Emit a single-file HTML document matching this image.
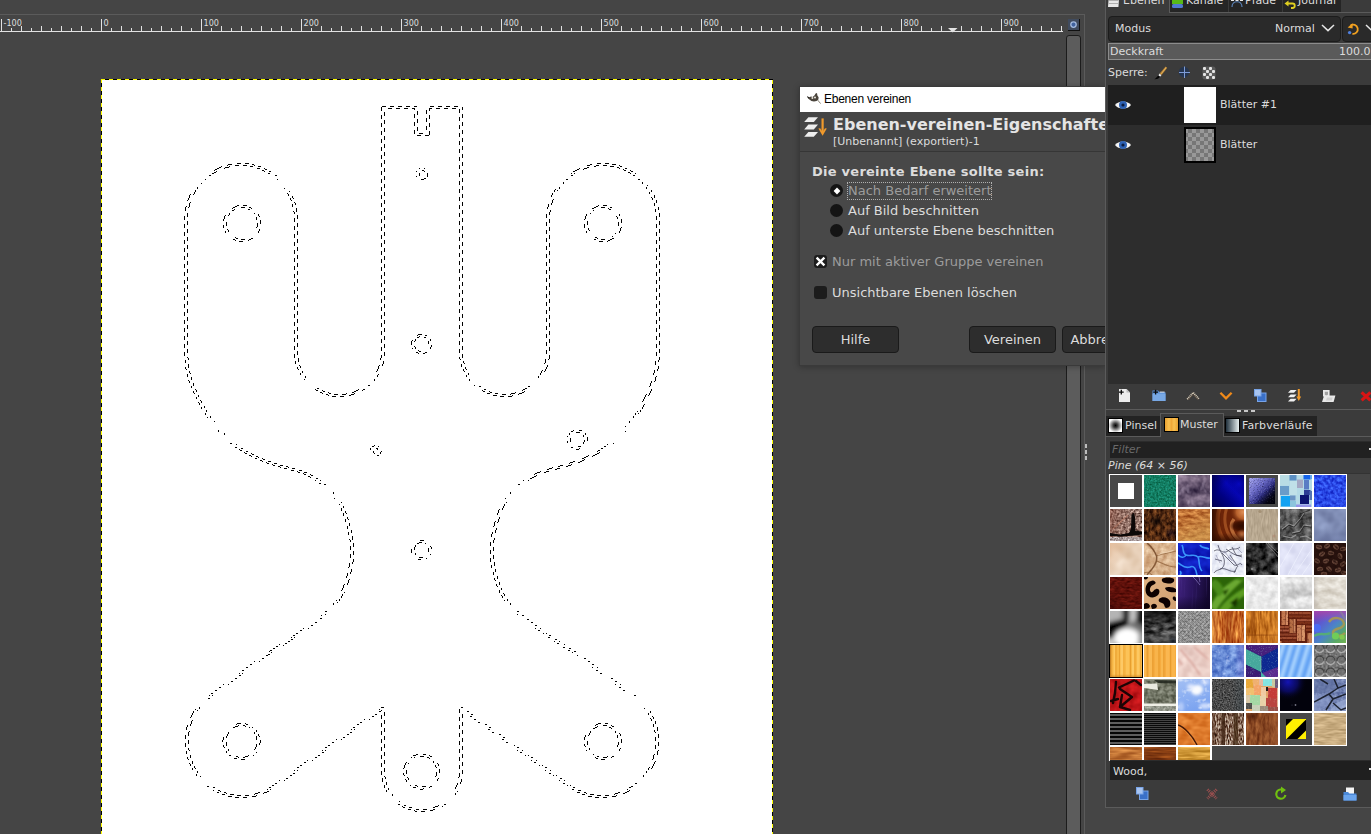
<!DOCTYPE html>
<html lang="de">
<head>
<meta charset="utf-8">
<title>Ebenen vereinen</title>
<style>
*{box-sizing:border-box;margin:0;padding:0}
html,body{width:1371px;height:834px;overflow:hidden;background:#454545}
body{position:relative;font-family:"DejaVu Sans","Liberation Sans",sans-serif;font-size:11px;color:#dcdcdc;line-height:1}
#root{position:absolute;left:0;top:0;width:1371px;height:834px;overflow:hidden;background:#454545}
#root div,#root svg,#root i{position:absolute;display:block}
#root .btn span{position:static}
.t{white-space:nowrap;line-height:1}
#rul{left:0;top:14px;width:1085px;height:18px;border-top:1px solid #5b5b5b}
#rul .num{font-family:"DejaVu Sans Condensed","DejaVu Sans",sans-serif;font-size:9px;color:#dcdcdc;top:4px}
#frameR{left:1084px;top:14px;width:1px;height:820px;background:#5b5b5b}
#nav{left:1068px;top:19px;width:12px;height:12px;background:#404b5e;border-right:1px solid #111;border-bottom:1px solid #111}
#vsb{left:1066px;top:35px;width:15px;height:810px;background:#5c5c5c;border:1px solid #1c1c1c;border-radius:3px}
#hdl{left:1085px;top:444px;width:3px;height:16px}
#hdl i{left:0;width:2px;height:4px;background:#bdbdbd}
#cv{left:101px;top:79px;width:672px;height:755px;background:#fff;overflow:hidden}
#cv .bt{left:0;top:0;width:672px;height:1px;background:repeating-linear-gradient(90deg,#ff0 0 4px,#000 4px 8px);z-index:2}
#cv .bl{left:0;top:0;width:1px;height:755px;background:repeating-linear-gradient(180deg,#ff0 0 4px,#000 4px 8px);z-index:2}
#cv .br{left:671px;top:0;width:1px;height:755px;background:linear-gradient(180deg,#000 0 1px,#ff0 1px 5px,#000 5px 8px) 0 0/1px 8px repeat-y;z-index:2}
#dlgsh{left:799px;top:86px;width:307px;height:280px;box-shadow:0 1px 6px rgba(0,0,0,.28);background:#3a3a3a}
#dlg{left:800px;top:87px;width:305px;height:278px;background:#484848;overflow:hidden}
#dlg .tb{left:0;top:0;width:305px;height:25px;background:#fff}
#dlg .tt{font-family:"Liberation Sans",sans-serif;color:#000;letter-spacing:-.25px}
#dlg .hd{left:0;top:25px;width:305px;height:40px;background:#454545;border-bottom:1px solid #363636}
#dlg .h1{font-weight:bold;color:#e4e4e4}
#dlg .h2{color:#dcdcdc}
.lbl{color:#dcdcdc}
.b{font-weight:bold;letter-spacing:.25px}
.dim{color:#9c9c9c}
.radio{width:13px;height:13px;border-radius:50%;background:#141414}
.rdot{width:6px;height:6px;background:#fff;transform:rotate(45deg) scale(.8)}
.focus{border:1px dotted #b0b0b0}
.chk{width:13px;height:13px;border-radius:3px;background:#1c1c1c}
.btn{height:27px;background:#2d2d2d;border:1px solid #1a1a1a;border-radius:4px;font-size:13px;color:#dcdcdc;text-align:center;line-height:25px;white-space:nowrap;overflow:hidden}
#pn{left:1105px;top:0;width:266px;height:834px;background:#3b3b3b;overflow:hidden}
.pt{color:#dcdcdc}
.it{font-style:italic}
.dk{background:#2a2a2a;border:1px solid #1c1c1c;border-radius:4px}

</style>
</head>
<body>
<div id="root">
<div id="rul">
<svg width="1064" height="18" style="left:0;top:0" shape-rendering="crispEdges" fill="#e2e2e2"><rect x="0" y="16" width="1063" height="1"/><rect x="1" y="4" width="1" height="13"/><rect x="11" y="13" width="1" height="4"/><rect x="21" y="11" width="1" height="6"/><rect x="31" y="13" width="1" height="4"/><rect x="41" y="11" width="1" height="6"/><rect x="51" y="13" width="1" height="4"/><rect x="61" y="11" width="1" height="6"/><rect x="71" y="13" width="1" height="4"/><rect x="81" y="11" width="1" height="6"/><rect x="91" y="13" width="1" height="4"/><rect x="101" y="4" width="1" height="13"/><rect x="111" y="13" width="1" height="4"/><rect x="121" y="11" width="1" height="6"/><rect x="131" y="13" width="1" height="4"/><rect x="141" y="11" width="1" height="6"/><rect x="151" y="13" width="1" height="4"/><rect x="161" y="11" width="1" height="6"/><rect x="171" y="13" width="1" height="4"/><rect x="181" y="11" width="1" height="6"/><rect x="191" y="13" width="1" height="4"/><rect x="201" y="4" width="1" height="13"/><rect x="211" y="13" width="1" height="4"/><rect x="221" y="11" width="1" height="6"/><rect x="231" y="13" width="1" height="4"/><rect x="241" y="11" width="1" height="6"/><rect x="251" y="13" width="1" height="4"/><rect x="261" y="11" width="1" height="6"/><rect x="271" y="13" width="1" height="4"/><rect x="281" y="11" width="1" height="6"/><rect x="291" y="13" width="1" height="4"/><rect x="301" y="4" width="1" height="13"/><rect x="311" y="13" width="1" height="4"/><rect x="321" y="11" width="1" height="6"/><rect x="331" y="13" width="1" height="4"/><rect x="341" y="11" width="1" height="6"/><rect x="351" y="13" width="1" height="4"/><rect x="361" y="11" width="1" height="6"/><rect x="371" y="13" width="1" height="4"/><rect x="381" y="11" width="1" height="6"/><rect x="391" y="13" width="1" height="4"/><rect x="401" y="4" width="1" height="13"/><rect x="411" y="13" width="1" height="4"/><rect x="421" y="11" width="1" height="6"/><rect x="431" y="13" width="1" height="4"/><rect x="441" y="11" width="1" height="6"/><rect x="451" y="13" width="1" height="4"/><rect x="461" y="11" width="1" height="6"/><rect x="471" y="13" width="1" height="4"/><rect x="481" y="11" width="1" height="6"/><rect x="491" y="13" width="1" height="4"/><rect x="501" y="4" width="1" height="13"/><rect x="511" y="13" width="1" height="4"/><rect x="521" y="11" width="1" height="6"/><rect x="531" y="13" width="1" height="4"/><rect x="541" y="11" width="1" height="6"/><rect x="551" y="13" width="1" height="4"/><rect x="561" y="11" width="1" height="6"/><rect x="571" y="13" width="1" height="4"/><rect x="581" y="11" width="1" height="6"/><rect x="591" y="13" width="1" height="4"/><rect x="601" y="4" width="1" height="13"/><rect x="611" y="13" width="1" height="4"/><rect x="621" y="11" width="1" height="6"/><rect x="631" y="13" width="1" height="4"/><rect x="641" y="11" width="1" height="6"/><rect x="651" y="13" width="1" height="4"/><rect x="661" y="11" width="1" height="6"/><rect x="671" y="13" width="1" height="4"/><rect x="681" y="11" width="1" height="6"/><rect x="691" y="13" width="1" height="4"/><rect x="701" y="4" width="1" height="13"/><rect x="711" y="13" width="1" height="4"/><rect x="721" y="11" width="1" height="6"/><rect x="731" y="13" width="1" height="4"/><rect x="741" y="11" width="1" height="6"/><rect x="751" y="13" width="1" height="4"/><rect x="761" y="11" width="1" height="6"/><rect x="771" y="13" width="1" height="4"/><rect x="781" y="11" width="1" height="6"/><rect x="791" y="13" width="1" height="4"/><rect x="801" y="4" width="1" height="13"/><rect x="811" y="13" width="1" height="4"/><rect x="821" y="11" width="1" height="6"/><rect x="831" y="13" width="1" height="4"/><rect x="841" y="11" width="1" height="6"/><rect x="851" y="13" width="1" height="4"/><rect x="861" y="11" width="1" height="6"/><rect x="871" y="13" width="1" height="4"/><rect x="881" y="11" width="1" height="6"/><rect x="891" y="13" width="1" height="4"/><rect x="901" y="4" width="1" height="13"/><rect x="911" y="13" width="1" height="4"/><rect x="921" y="11" width="1" height="6"/><rect x="931" y="13" width="1" height="4"/><rect x="941" y="11" width="1" height="6"/><rect x="951" y="13" width="1" height="4"/><rect x="961" y="11" width="1" height="6"/><rect x="971" y="13" width="1" height="4"/><rect x="981" y="11" width="1" height="6"/><rect x="991" y="13" width="1" height="4"/><rect x="1001" y="4" width="1" height="13"/><rect x="1011" y="13" width="1" height="4"/><rect x="1021" y="11" width="1" height="6"/><rect x="1031" y="13" width="1" height="4"/><rect x="1041" y="11" width="1" height="6"/><rect x="1051" y="13" width="1" height="4"/><rect x="1061" y="11" width="1" height="6"/></svg>
<div class="t num" style="left:3.5px">-100</div>
<div class="t num" style="left:103.5px">0</div>
<div class="t num" style="left:203.5px">100</div>
<div class="t num" style="left:303.5px">200</div>
<div class="t num" style="left:403.5px">300</div>
<div class="t num" style="left:503.5px">400</div>
<div class="t num" style="left:603.5px">500</div>
<div class="t num" style="left:703.5px">600</div>
<div class="t num" style="left:803.5px">700</div>
<div class="t num" style="left:903.5px">800</div>
<div class="t num" style="left:1003.5px">900</div>
<svg width="10" height="5" style="left:948px;top:13px" fill="#e2e2e2"><path d="M0 0 L9.5 0 L4.75 4.6 Z"/></svg>
</div>
<div id="frameR"></div>
<div id="nav"><svg width="12" height="12" viewBox="0 0 12 12" style="left:0;top:0"><circle cx="5.5" cy="5.6" r="2.7" fill="#41639f" stroke="#a3badf" stroke-width="1.3"/></svg></div>
<div id="vsb"></div>
<div id="hdl"><i style="top:0"></i><i style="top:6px"></i><i style="top:12px"></i></div>
<div id="cv"><div class="bt"></div><div class="bl"></div><div class="br"></div>
<svg width="672" height="755" viewBox="0 0 672 755" style="left:0;top:0" shape-rendering="crispEdges"><path d="" fill="#8a8a8a"/><path d="" fill="#444"/><path d="M281 27h4v1h-4zM289 27h4v1h-4zM297 27h4v1h-4zM305 27h4v1h-4zM313 27h3v1h-3zM329 27h4v1h-4zM337 27h4v1h-4zM345 27h4v1h-4zM353 27h4v1h-4zM280 28h1v1h-1zM361 28h1v1h-1zM280 29h1v1h-1zM287 29h4v1h-4zM295 29h4v1h-4zM303 29h4v1h-4zM311 29h3v1h-3zM328 29h3v1h-3zM335 29h4v1h-4zM343 29h4v1h-4zM351 29h4v1h-4zM361 29h1v1h-1zM280 30h1v1h-1zM313 30h1v1h-1zM328 30h1v1h-1zM358 30h1v1h-1zM361 30h1v1h-1zM280 31h1v1h-1zM325 31h1v1h-1zM328 31h1v1h-1zM358 31h1v1h-1zM316 32h1v1h-1zM325 32h1v1h-1zM358 32h1v1h-1zM283 33h1v1h-1zM316 33h1v1h-1zM325 33h1v1h-1zM358 33h1v1h-1zM283 34h1v1h-1zM316 34h1v1h-1zM325 34h1v1h-1zM283 35h1v1h-1zM313 35h1v1h-1zM316 35h1v1h-1zM361 35h1v1h-1zM280 36h1v1h-1zM283 36h1v1h-1zM313 36h1v1h-1zM328 36h1v1h-1zM361 36h1v1h-1zM280 37h1v1h-1zM313 37h1v1h-1zM328 37h1v1h-1zM361 37h1v1h-1zM280 38h1v1h-1zM313 38h1v1h-1zM328 38h1v1h-1zM358 38h1v1h-1zM361 38h1v1h-1zM280 39h1v1h-1zM325 39h1v1h-1zM328 39h1v1h-1zM358 39h1v1h-1zM316 40h1v1h-1zM325 40h1v1h-1zM358 40h1v1h-1zM283 41h1v1h-1zM316 41h1v1h-1zM325 41h1v1h-1zM358 41h1v1h-1zM283 42h1v1h-1zM316 42h1v1h-1zM325 42h1v1h-1zM283 43h1v1h-1zM313 43h1v1h-1zM316 43h1v1h-1zM361 43h1v1h-1zM280 44h1v1h-1zM283 44h1v1h-1zM313 44h1v1h-1zM328 44h1v1h-1zM361 44h1v1h-1zM280 45h1v1h-1zM313 45h1v1h-1zM328 45h1v1h-1zM361 45h1v1h-1zM280 46h1v1h-1zM313 46h1v1h-1zM328 46h1v1h-1zM358 46h1v1h-1zM361 46h1v1h-1zM280 47h1v1h-1zM325 47h1v1h-1zM328 47h1v1h-1zM358 47h1v1h-1zM316 48h1v1h-1zM325 48h1v1h-1zM358 48h1v1h-1zM283 49h1v1h-1zM316 49h1v1h-1zM325 49h1v1h-1zM358 49h1v1h-1zM283 50h1v1h-1zM316 50h1v1h-1zM325 50h1v1h-1zM283 51h1v1h-1zM313 51h1v1h-1zM316 51h1v1h-1zM361 51h1v1h-1zM280 52h1v1h-1zM283 52h1v1h-1zM313 52h1v1h-1zM328 52h1v1h-1zM361 52h1v1h-1zM280 53h1v1h-1zM313 53h1v1h-1zM328 53h1v1h-1zM361 53h1v1h-1zM280 54h1v1h-1zM313 54h1v1h-1zM318 54h4v1h-4zM328 54h1v1h-1zM358 54h1v1h-1zM361 54h1v1h-1zM280 55h1v1h-1zM328 55h1v1h-1zM358 55h1v1h-1zM316 56h4v1h-4zM324 56h4v1h-4zM358 56h1v1h-1zM283 57h1v1h-1zM358 57h1v1h-1zM283 58h1v1h-1zM283 59h1v1h-1zM361 59h1v1h-1zM280 60h1v1h-1zM283 60h1v1h-1zM361 60h1v1h-1zM280 61h1v1h-1zM361 61h1v1h-1zM280 62h1v1h-1zM358 62h1v1h-1zM361 62h1v1h-1zM280 63h1v1h-1zM358 63h1v1h-1zM358 64h1v1h-1zM283 65h1v1h-1zM358 65h1v1h-1zM283 66h1v1h-1zM283 67h1v1h-1zM361 67h1v1h-1zM280 68h1v1h-1zM283 68h1v1h-1zM361 68h1v1h-1zM280 69h1v1h-1zM361 69h1v1h-1zM280 70h1v1h-1zM358 70h1v1h-1zM361 70h1v1h-1zM280 71h1v1h-1zM358 71h1v1h-1zM358 72h1v1h-1zM283 73h1v1h-1zM358 73h1v1h-1zM283 74h1v1h-1zM283 75h1v1h-1zM361 75h1v1h-1zM280 76h1v1h-1zM283 76h1v1h-1zM361 76h1v1h-1zM280 77h1v1h-1zM361 77h1v1h-1zM280 78h1v1h-1zM358 78h1v1h-1zM361 78h1v1h-1zM280 79h1v1h-1zM358 79h1v1h-1zM358 80h1v1h-1zM283 81h1v1h-1zM358 81h1v1h-1zM283 82h1v1h-1zM283 83h1v1h-1zM361 83h1v1h-1zM136 84h4v1h-4zM144 84h4v1h-4zM280 84h1v1h-1zM283 84h1v1h-1zM361 84h1v1h-1zM496 84h4v1h-4zM504 84h4v1h-4zM127 85h4v1h-4zM151 85h2v1h-2zM280 85h1v1h-1zM361 85h1v1h-1zM489 85h2v1h-2zM511 85h4v1h-4zM126 86h1v1h-1zM134 86h4v1h-4zM142 86h4v1h-4zM153 86h1v1h-1zM280 86h1v1h-1zM358 86h1v1h-1zM361 86h1v1h-1zM486 86h3v1h-3zM495 86h3v1h-3zM502 86h4v1h-4zM518 86h1v1h-1zM120 87h1v1h-1zM128 87h1v1h-1zM149 87h3v1h-3zM157 87h3v1h-3zM280 87h1v1h-1zM358 87h1v1h-1zM493 87h2v1h-2zM509 87h4v1h-4zM519 87h2v1h-2zM118 88h2v1h-2zM124 88h4v1h-4zM358 88h1v1h-1zM486 88h2v1h-2zM516 88h2v1h-2zM116 89h2v1h-2zM123 89h1v1h-1zM156 89h3v1h-3zM163 89h1v1h-1zM283 89h1v1h-1zM318 89h1v1h-1zM323 89h1v1h-1zM358 89h1v1h-1zM478 89h1v1h-1zM483 89h3v1h-3zM518 89h1v1h-1zM524 89h2v1h-2zM114 90h2v1h-2zM164 90h2v1h-2zM283 90h1v1h-1zM476 90h2v1h-2zM482 90h1v1h-1zM522 90h1v1h-1zM113 91h1v1h-1zM161 91h2v1h-2zM283 91h1v1h-1zM321 91h2v1h-2zM361 91h1v1h-1zM474 91h2v1h-2zM523 91h2v1h-2zM529 91h1v1h-1zM115 92h1v1h-1zM163 92h1v1h-1zM168 92h2v1h-2zM280 92h1v1h-1zM283 92h1v1h-1zM315 92h1v1h-1zM323 92h1v1h-1zM361 92h1v1h-1zM472 92h2v1h-2zM530 92h2v1h-2zM113 93h2v1h-2zM280 93h1v1h-1zM361 93h1v1h-1zM527 93h2v1h-2zM111 94h2v1h-2zM167 94h2v1h-2zM280 94h1v1h-1zM318 94h1v1h-1zM326 94h1v1h-1zM358 94h1v1h-1zM361 94h1v1h-1zM470 94h1v1h-1zM473 94h1v1h-1zM529 94h1v1h-1zM534 94h1v1h-1zM280 95h1v1h-1zM318 95h1v1h-1zM326 95h1v1h-1zM358 95h1v1h-1zM108 96h2v1h-2zM174 96h2v1h-2zM318 96h1v1h-1zM326 96h1v1h-1zM358 96h1v1h-1zM470 96h2v1h-2zM532 96h2v1h-2zM283 97h1v1h-1zM315 97h1v1h-1zM326 97h1v1h-1zM358 97h1v1h-1zM283 98h1v1h-1zM283 99h1v1h-1zM323 99h2v1h-2zM361 99h1v1h-1zM104 100h1v1h-1zM176 100h1v1h-1zM280 100h1v1h-1zM283 100h1v1h-1zM320 100h3v1h-3zM361 100h1v1h-1zM465 100h2v1h-2zM537 100h2v1h-2zM280 101h1v1h-1zM361 101h1v1h-1zM280 102h1v1h-1zM358 102h1v1h-1zM361 102h1v1h-1zM280 103h1v1h-1zM358 103h1v1h-1zM462 103h1v1h-1zM541 103h1v1h-1zM100 104h1v1h-1zM358 104h1v1h-1zM462 104h1v1h-1zM541 104h1v1h-1zM283 105h1v1h-1zM358 105h1v1h-1zM283 106h1v1h-1zM546 106h1v1h-1zM283 107h1v1h-1zM361 107h1v1h-1zM96 108h1v1h-1zM280 108h1v1h-1zM283 108h1v1h-1zM361 108h1v1h-1zM458 108h1v1h-1zM545 108h1v1h-1zM96 109h1v1h-1zM183 109h1v1h-1zM280 109h1v1h-1zM361 109h1v1h-1zM458 109h1v1h-1zM545 109h1v1h-1zM280 110h1v1h-1zM358 110h1v1h-1zM361 110h1v1h-1zM454 110h1v1h-1zM94 111h1v1h-1zM280 111h1v1h-1zM358 111h1v1h-1zM453 111h1v1h-1zM456 111h1v1h-1zM550 111h1v1h-1zM94 112h1v1h-1zM188 112h1v1h-1zM358 112h1v1h-1zM453 112h1v1h-1zM550 112h1v1h-1zM93 113h1v1h-1zM283 113h1v1h-1zM358 113h1v1h-1zM548 113h1v1h-1zM93 114h1v1h-1zM186 114h1v1h-1zM283 114h1v1h-1zM451 114h1v1h-1zM548 114h1v1h-1zM89 115h1v1h-1zM92 115h1v1h-1zM187 115h1v1h-1zM283 115h1v1h-1zM361 115h1v1h-1zM451 115h1v1h-1zM88 116h1v1h-1zM187 116h1v1h-1zM280 116h1v1h-1zM283 116h1v1h-1zM361 116h1v1h-1zM450 116h1v1h-1zM553 116h1v1h-1zM88 117h1v1h-1zM191 117h1v1h-1zM280 117h1v1h-1zM361 117h1v1h-1zM450 117h1v1h-1zM553 117h1v1h-1zM88 118h1v1h-1zM191 118h1v1h-1zM280 118h1v1h-1zM358 118h1v1h-1zM361 118h1v1h-1zM550 118h1v1h-1zM553 118h1v1h-1zM87 119h1v1h-1zM189 119h1v1h-1zM192 119h1v1h-1zM280 119h1v1h-1zM358 119h1v1h-1zM551 119h1v1h-1zM87 120h1v1h-1zM189 120h1v1h-1zM358 120h1v1h-1zM452 120h1v1h-1zM551 120h1v1h-1zM86 121h1v1h-1zM190 121h1v1h-1zM283 121h1v1h-1zM358 121h1v1h-1zM451 121h1v1h-1zM555 121h1v1h-1zM283 122h1v1h-1zM451 122h1v1h-1zM555 122h1v1h-1zM89 123h1v1h-1zM193 123h1v1h-1zM283 123h1v1h-1zM361 123h1v1h-1zM451 123h1v1h-1zM555 123h1v1h-1zM88 124h1v1h-1zM194 124h1v1h-1zM280 124h1v1h-1zM283 124h1v1h-1zM361 124h1v1h-1zM450 124h1v1h-1zM553 124h1v1h-1zM88 125h1v1h-1zM191 125h1v1h-1zM194 125h1v1h-1zM280 125h1v1h-1zM361 125h1v1h-1zM447 125h1v1h-1zM450 125h1v1h-1zM553 125h1v1h-1zM88 126h1v1h-1zM136 126h2v1h-2zM142 126h4v1h-4zM191 126h1v1h-1zM280 126h1v1h-1zM358 126h1v1h-1zM361 126h1v1h-1zM447 126h1v1h-1zM497 126h1v1h-1zM502 126h4v1h-4zM553 126h1v1h-1zM85 127h1v1h-1zM88 127h1v1h-1zM134 127h2v1h-2zM191 127h1v1h-1zM280 127h1v1h-1zM358 127h1v1h-1zM447 127h1v1h-1zM495 127h2v1h-2zM84 128h1v1h-1zM87 128h1v1h-1zM132 128h2v1h-2zM140 128h4v1h-4zM148 128h2v1h-2zM358 128h1v1h-1zM446 128h1v1h-1zM493 128h2v1h-2zM500 128h4v1h-4zM509 128h2v1h-2zM557 128h1v1h-1zM84 129h1v1h-1zM131 129h1v1h-1zM150 129h1v1h-1zM195 129h1v1h-1zM283 129h1v1h-1zM358 129h1v1h-1zM446 129h1v1h-1zM491 129h2v1h-2zM507 129h1v1h-1zM557 129h1v1h-1zM84 130h1v1h-1zM133 130h1v1h-1zM147 130h2v1h-2zM195 130h1v1h-1zM283 130h1v1h-1zM508 130h2v1h-2zM554 130h1v1h-1zM557 130h1v1h-1zM84 131h1v1h-1zM131 131h2v1h-2zM195 131h1v1h-1zM283 131h1v1h-1zM361 131h1v1h-1zM449 131h1v1h-1zM492 131h1v1h-1zM554 131h1v1h-1zM192 132h1v1h-1zM195 132h1v1h-1zM280 132h1v1h-1zM283 132h1v1h-1zM361 132h1v1h-1zM449 132h1v1h-1zM554 132h1v1h-1zM193 133h1v1h-1zM280 133h1v1h-1zM361 133h1v1h-1zM448 133h1v1h-1zM86 134h1v1h-1zM128 134h1v1h-1zM153 134h1v1h-1zM193 134h1v1h-1zM280 134h1v1h-1zM358 134h1v1h-1zM361 134h1v1h-1zM448 134h1v1h-1zM489 134h1v1h-1zM558 134h1v1h-1zM86 135h1v1h-1zM128 135h1v1h-1zM157 135h1v1h-1zM280 135h1v1h-1zM358 135h1v1h-1zM445 135h1v1h-1zM448 135h1v1h-1zM485 135h1v1h-1zM518 135h1v1h-1zM558 135h1v1h-1zM86 136h1v1h-1zM124 136h1v1h-1zM127 136h1v1h-1zM157 136h1v1h-1zM196 136h1v1h-1zM358 136h1v1h-1zM445 136h1v1h-1zM485 136h1v1h-1zM518 136h1v1h-1zM558 136h1v1h-1zM83 137h1v1h-1zM86 137h1v1h-1zM123 137h1v1h-1zM158 137h1v1h-1zM196 137h1v1h-1zM283 137h1v1h-1zM358 137h1v1h-1zM445 137h1v1h-1zM484 137h1v1h-1zM515 137h1v1h-1zM555 137h1v1h-1zM558 137h1v1h-1zM83 138h1v1h-1zM123 138h1v1h-1zM155 138h1v1h-1zM196 138h1v1h-1zM283 138h1v1h-1zM445 138h1v1h-1zM484 138h1v1h-1zM516 138h1v1h-1zM555 138h1v1h-1zM83 139h1v1h-1zM123 139h1v1h-1zM155 139h1v1h-1zM193 139h1v1h-1zM196 139h1v1h-1zM283 139h1v1h-1zM361 139h1v1h-1zM484 139h1v1h-1zM516 139h1v1h-1zM555 139h1v1h-1zM83 140h1v1h-1zM122 140h1v1h-1zM155 140h1v1h-1zM193 140h1v1h-1zM280 140h1v1h-1zM283 140h1v1h-1zM361 140h1v1h-1zM448 140h1v1h-1zM483 140h1v1h-1zM520 140h1v1h-1zM555 140h1v1h-1zM122 141h1v1h-1zM159 141h1v1h-1zM193 141h1v1h-1zM280 141h1v1h-1zM361 141h1v1h-1zM448 141h1v1h-1zM520 141h1v1h-1zM86 142h1v1h-1zM159 142h1v1h-1zM193 142h1v1h-1zM280 142h1v1h-1zM358 142h1v1h-1zM361 142h1v1h-1zM448 142h1v1h-1zM486 142h1v1h-1zM520 142h1v1h-1zM558 142h1v1h-1zM86 143h1v1h-1zM125 143h1v1h-1zM159 143h1v1h-1zM280 143h1v1h-1zM358 143h1v1h-1zM445 143h1v1h-1zM448 143h1v1h-1zM486 143h1v1h-1zM517 143h1v1h-1zM520 143h1v1h-1zM558 143h1v1h-1zM86 144h1v1h-1zM125 144h1v1h-1zM156 144h1v1h-1zM159 144h1v1h-1zM196 144h1v1h-1zM358 144h1v1h-1zM445 144h1v1h-1zM486 144h1v1h-1zM517 144h1v1h-1zM558 144h1v1h-1zM83 145h1v1h-1zM86 145h1v1h-1zM125 145h1v1h-1zM156 145h1v1h-1zM196 145h1v1h-1zM283 145h1v1h-1zM358 145h1v1h-1zM445 145h1v1h-1zM483 145h1v1h-1zM486 145h1v1h-1zM517 145h1v1h-1zM555 145h1v1h-1zM558 145h1v1h-1zM83 146h1v1h-1zM122 146h1v1h-1zM125 146h1v1h-1zM156 146h1v1h-1zM196 146h1v1h-1zM283 146h1v1h-1zM445 146h1v1h-1zM483 146h1v1h-1zM517 146h1v1h-1zM555 146h1v1h-1zM83 147h1v1h-1zM122 147h1v1h-1zM156 147h1v1h-1zM193 147h1v1h-1zM196 147h1v1h-1zM283 147h1v1h-1zM361 147h1v1h-1zM483 147h1v1h-1zM555 147h1v1h-1zM83 148h1v1h-1zM122 148h1v1h-1zM155 148h1v1h-1zM193 148h1v1h-1zM280 148h1v1h-1zM283 148h1v1h-1zM361 148h1v1h-1zM448 148h1v1h-1zM483 148h1v1h-1zM520 148h1v1h-1zM555 148h1v1h-1zM193 149h1v1h-1zM280 149h1v1h-1zM361 149h1v1h-1zM448 149h1v1h-1zM487 149h1v1h-1zM519 149h1v1h-1zM86 150h1v1h-1zM126 150h1v1h-1zM158 150h1v1h-1zM193 150h1v1h-1zM280 150h1v1h-1zM358 150h1v1h-1zM361 150h1v1h-1zM448 150h1v1h-1zM487 150h1v1h-1zM519 150h1v1h-1zM558 150h1v1h-1zM86 151h1v1h-1zM127 151h1v1h-1zM158 151h1v1h-1zM280 151h1v1h-1zM358 151h1v1h-1zM445 151h1v1h-1zM448 151h1v1h-1zM488 151h1v1h-1zM519 151h1v1h-1zM558 151h1v1h-1zM86 152h1v1h-1zM124 152h1v1h-1zM127 152h1v1h-1zM157 152h1v1h-1zM196 152h1v1h-1zM358 152h1v1h-1zM445 152h1v1h-1zM485 152h1v1h-1zM518 152h1v1h-1zM558 152h1v1h-1zM83 153h1v1h-1zM86 153h1v1h-1zM124 153h1v1h-1zM157 153h1v1h-1zM196 153h1v1h-1zM283 153h1v1h-1zM358 153h1v1h-1zM445 153h1v1h-1zM485 153h1v1h-1zM518 153h1v1h-1zM555 153h1v1h-1zM558 153h1v1h-1zM83 154h1v1h-1zM196 154h1v1h-1zM283 154h1v1h-1zM445 154h1v1h-1zM514 154h1v1h-1zM555 154h1v1h-1zM83 155h1v1h-1zM193 155h1v1h-1zM196 155h1v1h-1zM283 155h1v1h-1zM361 155h1v1h-1zM555 155h1v1h-1zM83 156h1v1h-1zM193 156h1v1h-1zM280 156h1v1h-1zM283 156h1v1h-1zM361 156h1v1h-1zM448 156h1v1h-1zM555 156h1v1h-1zM193 157h1v1h-1zM280 157h1v1h-1zM361 157h1v1h-1zM448 157h1v1h-1zM511 157h1v1h-1zM86 158h1v1h-1zM134 158h1v1h-1zM193 158h1v1h-1zM280 158h1v1h-1zM358 158h1v1h-1zM361 158h1v1h-1zM448 158h1v1h-1zM494 158h2v1h-2zM558 158h1v1h-1zM86 159h1v1h-1zM135 159h2v1h-2zM150 159h2v1h-2zM280 159h1v1h-1zM358 159h1v1h-1zM445 159h1v1h-1zM448 159h1v1h-1zM496 159h1v1h-1zM511 159h2v1h-2zM558 159h1v1h-1zM86 160h1v1h-1zM132 160h2v1h-2zM140 160h4v1h-4zM148 160h2v1h-2zM196 160h1v1h-1zM358 160h1v1h-1zM445 160h1v1h-1zM493 160h2v1h-2zM500 160h4v1h-4zM509 160h2v1h-2zM558 160h1v1h-1zM83 161h1v1h-1zM86 161h1v1h-1zM134 161h1v1h-1zM147 161h1v1h-1zM196 161h1v1h-1zM283 161h1v1h-1zM358 161h1v1h-1zM445 161h1v1h-1zM507 161h2v1h-2zM555 161h1v1h-1zM558 161h1v1h-1zM83 162h1v1h-1zM138 162h4v1h-4zM196 162h1v1h-1zM283 162h1v1h-1zM445 162h1v1h-1zM498 162h4v1h-4zM506 162h1v1h-1zM555 162h1v1h-1zM83 163h1v1h-1zM193 163h1v1h-1zM196 163h1v1h-1zM283 163h1v1h-1zM361 163h1v1h-1zM555 163h1v1h-1zM83 164h1v1h-1zM193 164h1v1h-1zM280 164h1v1h-1zM283 164h1v1h-1zM361 164h1v1h-1zM448 164h1v1h-1zM555 164h1v1h-1zM193 165h1v1h-1zM280 165h1v1h-1zM361 165h1v1h-1zM448 165h1v1h-1zM86 166h1v1h-1zM193 166h1v1h-1zM280 166h1v1h-1zM358 166h1v1h-1zM361 166h1v1h-1zM448 166h1v1h-1zM558 166h1v1h-1zM86 167h1v1h-1zM280 167h1v1h-1zM358 167h1v1h-1zM445 167h1v1h-1zM448 167h1v1h-1zM558 167h1v1h-1zM86 168h1v1h-1zM196 168h1v1h-1zM358 168h1v1h-1zM445 168h1v1h-1zM558 168h1v1h-1zM83 169h1v1h-1zM86 169h1v1h-1zM196 169h1v1h-1zM283 169h1v1h-1zM358 169h1v1h-1zM445 169h1v1h-1zM555 169h1v1h-1zM558 169h1v1h-1zM83 170h1v1h-1zM196 170h1v1h-1zM283 170h1v1h-1zM445 170h1v1h-1zM555 170h1v1h-1zM83 171h1v1h-1zM193 171h1v1h-1zM196 171h1v1h-1zM283 171h1v1h-1zM361 171h1v1h-1zM555 171h1v1h-1zM83 172h1v1h-1zM193 172h1v1h-1zM280 172h1v1h-1zM283 172h1v1h-1zM361 172h1v1h-1zM448 172h1v1h-1zM555 172h1v1h-1zM193 173h1v1h-1zM280 173h1v1h-1zM361 173h1v1h-1zM448 173h1v1h-1zM86 174h1v1h-1zM193 174h1v1h-1zM280 174h1v1h-1zM358 174h1v1h-1zM361 174h1v1h-1zM448 174h1v1h-1zM558 174h1v1h-1zM86 175h1v1h-1zM280 175h1v1h-1zM358 175h1v1h-1zM445 175h1v1h-1zM448 175h1v1h-1zM558 175h1v1h-1zM86 176h1v1h-1zM196 176h1v1h-1zM358 176h1v1h-1zM445 176h1v1h-1zM558 176h1v1h-1zM83 177h1v1h-1zM86 177h1v1h-1zM196 177h1v1h-1zM283 177h1v1h-1zM358 177h1v1h-1zM445 177h1v1h-1zM555 177h1v1h-1zM558 177h1v1h-1zM83 178h1v1h-1zM196 178h1v1h-1zM283 178h1v1h-1zM445 178h1v1h-1zM555 178h1v1h-1zM83 179h1v1h-1zM193 179h1v1h-1zM196 179h1v1h-1zM283 179h1v1h-1zM361 179h1v1h-1zM555 179h1v1h-1zM83 180h1v1h-1zM193 180h1v1h-1zM280 180h1v1h-1zM283 180h1v1h-1zM361 180h1v1h-1zM448 180h1v1h-1zM555 180h1v1h-1zM193 181h1v1h-1zM280 181h1v1h-1zM361 181h1v1h-1zM448 181h1v1h-1zM86 182h1v1h-1zM193 182h1v1h-1zM280 182h1v1h-1zM358 182h1v1h-1zM361 182h1v1h-1zM448 182h1v1h-1zM558 182h1v1h-1zM86 183h1v1h-1zM280 183h1v1h-1zM358 183h1v1h-1zM445 183h1v1h-1zM448 183h1v1h-1zM558 183h1v1h-1zM86 184h1v1h-1zM196 184h1v1h-1zM358 184h1v1h-1zM445 184h1v1h-1zM558 184h1v1h-1zM83 185h1v1h-1zM86 185h1v1h-1zM196 185h1v1h-1zM283 185h1v1h-1zM358 185h1v1h-1zM445 185h1v1h-1zM555 185h1v1h-1zM558 185h1v1h-1zM83 186h1v1h-1zM196 186h1v1h-1zM283 186h1v1h-1zM445 186h1v1h-1zM555 186h1v1h-1zM83 187h1v1h-1zM193 187h1v1h-1zM196 187h1v1h-1zM283 187h1v1h-1zM361 187h1v1h-1zM555 187h1v1h-1zM83 188h1v1h-1zM193 188h1v1h-1zM280 188h1v1h-1zM283 188h1v1h-1zM361 188h1v1h-1zM448 188h1v1h-1zM555 188h1v1h-1zM193 189h1v1h-1zM280 189h1v1h-1zM361 189h1v1h-1zM448 189h1v1h-1zM86 190h1v1h-1zM193 190h1v1h-1zM280 190h1v1h-1zM358 190h1v1h-1zM361 190h1v1h-1zM448 190h1v1h-1zM558 190h1v1h-1zM86 191h1v1h-1zM280 191h1v1h-1zM358 191h1v1h-1zM445 191h1v1h-1zM448 191h1v1h-1zM558 191h1v1h-1zM86 192h1v1h-1zM196 192h1v1h-1zM358 192h1v1h-1zM445 192h1v1h-1zM558 192h1v1h-1zM83 193h1v1h-1zM86 193h1v1h-1zM196 193h1v1h-1zM283 193h1v1h-1zM358 193h1v1h-1zM445 193h1v1h-1zM555 193h1v1h-1zM558 193h1v1h-1zM83 194h1v1h-1zM196 194h1v1h-1zM283 194h1v1h-1zM445 194h1v1h-1zM555 194h1v1h-1zM83 195h1v1h-1zM193 195h1v1h-1zM196 195h1v1h-1zM283 195h1v1h-1zM361 195h1v1h-1zM555 195h1v1h-1zM83 196h1v1h-1zM193 196h1v1h-1zM280 196h1v1h-1zM283 196h1v1h-1zM361 196h1v1h-1zM448 196h1v1h-1zM555 196h1v1h-1zM193 197h1v1h-1zM280 197h1v1h-1zM361 197h1v1h-1zM448 197h1v1h-1zM86 198h1v1h-1zM193 198h1v1h-1zM280 198h1v1h-1zM358 198h1v1h-1zM361 198h1v1h-1zM448 198h1v1h-1zM558 198h1v1h-1zM86 199h1v1h-1zM280 199h1v1h-1zM358 199h1v1h-1zM445 199h1v1h-1zM448 199h1v1h-1zM558 199h1v1h-1zM86 200h1v1h-1zM196 200h1v1h-1zM358 200h1v1h-1zM445 200h1v1h-1zM558 200h1v1h-1zM83 201h1v1h-1zM86 201h1v1h-1zM196 201h1v1h-1zM283 201h1v1h-1zM358 201h1v1h-1zM445 201h1v1h-1zM555 201h1v1h-1zM558 201h1v1h-1zM83 202h1v1h-1zM196 202h1v1h-1zM283 202h1v1h-1zM445 202h1v1h-1zM555 202h1v1h-1zM83 203h1v1h-1zM193 203h1v1h-1zM196 203h1v1h-1zM283 203h1v1h-1zM361 203h1v1h-1zM555 203h1v1h-1zM83 204h1v1h-1zM193 204h1v1h-1zM280 204h1v1h-1zM283 204h1v1h-1zM361 204h1v1h-1zM448 204h1v1h-1zM555 204h1v1h-1zM193 205h1v1h-1zM280 205h1v1h-1zM361 205h1v1h-1zM448 205h1v1h-1zM86 206h1v1h-1zM193 206h1v1h-1zM280 206h1v1h-1zM358 206h1v1h-1zM361 206h1v1h-1zM448 206h1v1h-1zM558 206h1v1h-1zM86 207h1v1h-1zM280 207h1v1h-1zM358 207h1v1h-1zM445 207h1v1h-1zM448 207h1v1h-1zM558 207h1v1h-1zM86 208h1v1h-1zM196 208h1v1h-1zM358 208h1v1h-1zM445 208h1v1h-1zM558 208h1v1h-1zM83 209h1v1h-1zM86 209h1v1h-1zM196 209h1v1h-1zM283 209h1v1h-1zM358 209h1v1h-1zM445 209h1v1h-1zM555 209h1v1h-1zM558 209h1v1h-1zM83 210h1v1h-1zM196 210h1v1h-1zM283 210h1v1h-1zM445 210h1v1h-1zM555 210h1v1h-1zM83 211h1v1h-1zM193 211h1v1h-1zM196 211h1v1h-1zM283 211h1v1h-1zM361 211h1v1h-1zM555 211h1v1h-1zM83 212h1v1h-1zM193 212h1v1h-1zM280 212h1v1h-1zM283 212h1v1h-1zM361 212h1v1h-1zM448 212h1v1h-1zM555 212h1v1h-1zM193 213h1v1h-1zM280 213h1v1h-1zM361 213h1v1h-1zM448 213h1v1h-1zM86 214h1v1h-1zM193 214h1v1h-1zM280 214h1v1h-1zM358 214h1v1h-1zM361 214h1v1h-1zM448 214h1v1h-1zM558 214h1v1h-1zM86 215h1v1h-1zM280 215h1v1h-1zM358 215h1v1h-1zM445 215h1v1h-1zM448 215h1v1h-1zM558 215h1v1h-1zM86 216h1v1h-1zM196 216h1v1h-1zM358 216h1v1h-1zM445 216h1v1h-1zM558 216h1v1h-1zM83 217h1v1h-1zM86 217h1v1h-1zM196 217h1v1h-1zM283 217h1v1h-1zM358 217h1v1h-1zM445 217h1v1h-1zM555 217h1v1h-1zM558 217h1v1h-1zM83 218h1v1h-1zM196 218h1v1h-1zM283 218h1v1h-1zM445 218h1v1h-1zM555 218h1v1h-1zM83 219h1v1h-1zM193 219h1v1h-1zM196 219h1v1h-1zM283 219h1v1h-1zM361 219h1v1h-1zM555 219h1v1h-1zM83 220h1v1h-1zM193 220h1v1h-1zM280 220h1v1h-1zM283 220h1v1h-1zM361 220h1v1h-1zM448 220h1v1h-1zM555 220h1v1h-1zM193 221h1v1h-1zM280 221h1v1h-1zM361 221h1v1h-1zM448 221h1v1h-1zM86 222h1v1h-1zM193 222h1v1h-1zM280 222h1v1h-1zM358 222h1v1h-1zM361 222h1v1h-1zM448 222h1v1h-1zM558 222h1v1h-1zM86 223h1v1h-1zM280 223h1v1h-1zM358 223h1v1h-1zM445 223h1v1h-1zM448 223h1v1h-1zM558 223h1v1h-1zM86 224h1v1h-1zM196 224h1v1h-1zM358 224h1v1h-1zM445 224h1v1h-1zM558 224h1v1h-1zM83 225h1v1h-1zM86 225h1v1h-1zM196 225h1v1h-1zM283 225h1v1h-1zM358 225h1v1h-1zM445 225h1v1h-1zM555 225h1v1h-1zM558 225h1v1h-1zM83 226h1v1h-1zM196 226h1v1h-1zM283 226h1v1h-1zM445 226h1v1h-1zM555 226h1v1h-1zM83 227h1v1h-1zM193 227h1v1h-1zM196 227h1v1h-1zM283 227h1v1h-1zM361 227h1v1h-1zM555 227h1v1h-1zM83 228h1v1h-1zM193 228h1v1h-1zM280 228h1v1h-1zM283 228h1v1h-1zM361 228h1v1h-1zM448 228h1v1h-1zM555 228h1v1h-1zM193 229h1v1h-1zM280 229h1v1h-1zM361 229h1v1h-1zM448 229h1v1h-1zM86 230h1v1h-1zM193 230h1v1h-1zM280 230h1v1h-1zM358 230h1v1h-1zM361 230h1v1h-1zM448 230h1v1h-1zM558 230h1v1h-1zM86 231h1v1h-1zM280 231h1v1h-1zM358 231h1v1h-1zM445 231h1v1h-1zM448 231h1v1h-1zM558 231h1v1h-1zM86 232h1v1h-1zM196 232h1v1h-1zM358 232h1v1h-1zM445 232h1v1h-1zM558 232h1v1h-1zM83 233h1v1h-1zM86 233h1v1h-1zM196 233h1v1h-1zM283 233h1v1h-1zM358 233h1v1h-1zM445 233h1v1h-1zM555 233h1v1h-1zM558 233h1v1h-1zM83 234h1v1h-1zM196 234h1v1h-1zM283 234h1v1h-1zM445 234h1v1h-1zM555 234h1v1h-1zM83 235h1v1h-1zM193 235h1v1h-1zM196 235h1v1h-1zM283 235h1v1h-1zM361 235h1v1h-1zM555 235h1v1h-1zM83 236h1v1h-1zM193 236h1v1h-1zM280 236h1v1h-1zM283 236h1v1h-1zM361 236h1v1h-1zM448 236h1v1h-1zM555 236h1v1h-1zM193 237h1v1h-1zM280 237h1v1h-1zM361 237h1v1h-1zM448 237h1v1h-1zM86 238h1v1h-1zM193 238h1v1h-1zM280 238h1v1h-1zM358 238h1v1h-1zM361 238h1v1h-1zM448 238h1v1h-1zM558 238h1v1h-1zM86 239h1v1h-1zM280 239h1v1h-1zM358 239h1v1h-1zM445 239h1v1h-1zM448 239h1v1h-1zM558 239h1v1h-1zM86 240h1v1h-1zM196 240h1v1h-1zM358 240h1v1h-1zM445 240h1v1h-1zM558 240h1v1h-1zM83 241h1v1h-1zM86 241h1v1h-1zM196 241h1v1h-1zM283 241h1v1h-1zM358 241h1v1h-1zM445 241h1v1h-1zM555 241h1v1h-1zM558 241h1v1h-1zM83 242h1v1h-1zM196 242h1v1h-1zM283 242h1v1h-1zM445 242h1v1h-1zM555 242h1v1h-1zM83 243h1v1h-1zM193 243h1v1h-1zM196 243h1v1h-1zM283 243h1v1h-1zM361 243h1v1h-1zM555 243h1v1h-1zM83 244h1v1h-1zM193 244h1v1h-1zM280 244h1v1h-1zM283 244h1v1h-1zM361 244h1v1h-1zM448 244h1v1h-1zM555 244h1v1h-1zM193 245h1v1h-1zM280 245h1v1h-1zM361 245h1v1h-1zM448 245h1v1h-1zM86 246h1v1h-1zM193 246h1v1h-1zM280 246h1v1h-1zM358 246h1v1h-1zM361 246h1v1h-1zM448 246h1v1h-1zM558 246h1v1h-1zM86 247h1v1h-1zM280 247h1v1h-1zM358 247h1v1h-1zM445 247h1v1h-1zM448 247h1v1h-1zM558 247h1v1h-1zM86 248h1v1h-1zM196 248h1v1h-1zM358 248h1v1h-1zM445 248h1v1h-1zM558 248h1v1h-1zM83 249h1v1h-1zM86 249h1v1h-1zM196 249h1v1h-1zM283 249h1v1h-1zM358 249h1v1h-1zM445 249h1v1h-1zM555 249h1v1h-1zM558 249h1v1h-1zM83 250h1v1h-1zM196 250h1v1h-1zM283 250h1v1h-1zM445 250h1v1h-1zM555 250h1v1h-1zM83 251h1v1h-1zM193 251h1v1h-1zM196 251h1v1h-1zM283 251h1v1h-1zM361 251h1v1h-1zM555 251h1v1h-1zM83 252h1v1h-1zM193 252h1v1h-1zM280 252h1v1h-1zM283 252h1v1h-1zM361 252h1v1h-1zM448 252h1v1h-1zM555 252h1v1h-1zM193 253h1v1h-1zM280 253h1v1h-1zM361 253h1v1h-1zM448 253h1v1h-1zM86 254h1v1h-1zM193 254h1v1h-1zM280 254h1v1h-1zM358 254h1v1h-1zM361 254h1v1h-1zM448 254h1v1h-1zM558 254h1v1h-1zM86 255h1v1h-1zM280 255h1v1h-1zM317 255h4v1h-4zM358 255h1v1h-1zM445 255h1v1h-1zM448 255h1v1h-1zM558 255h1v1h-1zM86 256h1v1h-1zM196 256h1v1h-1zM316 256h1v1h-1zM324 256h2v1h-2zM358 256h1v1h-1zM445 256h1v1h-1zM558 256h1v1h-1zM83 257h1v1h-1zM86 257h1v1h-1zM196 257h1v1h-1zM283 257h1v1h-1zM318 257h1v1h-1zM358 257h1v1h-1zM445 257h1v1h-1zM555 257h1v1h-1zM558 257h1v1h-1zM83 258h1v1h-1zM196 258h1v1h-1zM283 258h1v1h-1zM316 258h2v1h-2zM323 258h2v1h-2zM445 258h1v1h-1zM555 258h1v1h-1zM83 259h1v1h-1zM193 259h1v1h-1zM196 259h1v1h-1zM283 259h1v1h-1zM361 259h1v1h-1zM555 259h1v1h-1zM83 260h1v1h-1zM193 260h1v1h-1zM280 260h1v1h-1zM283 260h1v1h-1zM314 260h1v1h-1zM329 260h1v1h-1zM361 260h1v1h-1zM448 260h1v1h-1zM555 260h1v1h-1zM193 261h1v1h-1zM280 261h1v1h-1zM311 261h1v1h-1zM314 261h1v1h-1zM329 261h1v1h-1zM361 261h1v1h-1zM448 261h1v1h-1zM86 262h1v1h-1zM193 262h1v1h-1zM280 262h1v1h-1zM310 262h1v1h-1zM313 262h1v1h-1zM327 262h1v1h-1zM358 262h1v1h-1zM361 262h1v1h-1zM448 262h1v1h-1zM558 262h1v1h-1zM86 263h1v1h-1zM280 263h1v1h-1zM310 263h1v1h-1zM327 263h1v1h-1zM358 263h1v1h-1zM445 263h1v1h-1zM448 263h1v1h-1zM558 263h1v1h-1zM86 264h1v1h-1zM196 264h1v1h-1zM310 264h1v1h-1zM327 264h1v1h-1zM358 264h1v1h-1zM445 264h1v1h-1zM558 264h1v1h-1zM83 265h1v1h-1zM86 265h1v1h-1zM196 265h1v1h-1zM283 265h1v1h-1zM310 265h1v1h-1zM358 265h1v1h-1zM445 265h1v1h-1zM555 265h1v1h-1zM558 265h1v1h-1zM83 266h1v1h-1zM196 266h1v1h-1zM283 266h1v1h-1zM330 266h1v1h-1zM445 266h1v1h-1zM555 266h1v1h-1zM83 267h1v1h-1zM193 267h1v1h-1zM196 267h1v1h-1zM283 267h1v1h-1zM313 267h1v1h-1zM330 267h1v1h-1zM361 267h1v1h-1zM555 267h1v1h-1zM83 268h1v1h-1zM193 268h1v1h-1zM280 268h1v1h-1zM283 268h1v1h-1zM314 268h1v1h-1zM329 268h1v1h-1zM361 268h1v1h-1zM448 268h1v1h-1zM555 268h1v1h-1zM193 269h1v1h-1zM280 269h1v1h-1zM311 269h1v1h-1zM314 269h1v1h-1zM329 269h1v1h-1zM361 269h1v1h-1zM448 269h1v1h-1zM86 270h1v1h-1zM193 270h1v1h-1zM280 270h1v1h-1zM358 270h1v1h-1zM361 270h1v1h-1zM448 270h1v1h-1zM558 270h1v1h-1zM86 271h1v1h-1zM280 271h1v1h-1zM317 271h1v1h-1zM358 271h1v1h-1zM445 271h1v1h-1zM448 271h1v1h-1zM558 271h1v1h-1zM86 272h1v1h-1zM196 272h1v1h-1zM318 272h2v1h-2zM358 272h1v1h-1zM445 272h1v1h-1zM558 272h1v1h-1zM83 273h1v1h-1zM86 273h1v1h-1zM196 273h1v1h-1zM283 273h1v1h-1zM315 273h2v1h-2zM324 273h2v1h-2zM358 273h1v1h-1zM445 273h1v1h-1zM555 273h1v1h-1zM558 273h1v1h-1zM83 274h1v1h-1zM196 274h1v1h-1zM283 274h1v1h-1zM317 274h1v1h-1zM322 274h2v1h-2zM445 274h1v1h-1zM555 274h1v1h-1zM83 275h1v1h-1zM193 275h1v1h-1zM196 275h1v1h-1zM283 275h1v1h-1zM361 275h1v1h-1zM555 275h1v1h-1zM83 276h1v1h-1zM193 276h1v1h-1zM280 276h1v1h-1zM283 276h1v1h-1zM361 276h1v1h-1zM448 276h1v1h-1zM555 276h1v1h-1zM193 277h1v1h-1zM280 277h1v1h-1zM361 277h1v1h-1zM448 277h1v1h-1zM86 278h1v1h-1zM193 278h1v1h-1zM280 278h1v1h-1zM358 278h1v1h-1zM361 278h1v1h-1zM448 278h1v1h-1zM558 278h1v1h-1zM87 279h1v1h-1zM197 279h1v1h-1zM279 279h1v1h-1zM358 279h1v1h-1zM448 279h1v1h-1zM558 279h1v1h-1zM87 280h1v1h-1zM197 280h1v1h-1zM279 280h1v1h-1zM359 280h1v1h-1zM444 280h1v1h-1zM447 280h1v1h-1zM558 280h1v1h-1zM84 281h1v1h-1zM197 281h1v1h-1zM444 281h1v1h-1zM557 281h1v1h-1zM84 282h1v1h-1zM194 282h1v1h-1zM197 282h1v1h-1zM282 282h1v1h-1zM362 282h1v1h-1zM444 282h1v1h-1zM554 282h1v1h-1zM557 282h1v1h-1zM84 283h1v1h-1zM194 283h1v1h-1zM282 283h1v1h-1zM362 283h1v1h-1zM444 283h1v1h-1zM554 283h1v1h-1zM194 284h1v1h-1zM282 284h1v1h-1zM363 284h1v1h-1zM443 284h1v1h-1zM554 284h1v1h-1zM87 285h1v1h-1zM281 285h1v1h-1zM360 285h1v1h-1zM554 285h1v1h-1zM87 286h1v1h-1zM198 286h1v1h-1zM278 286h1v1h-1zM281 286h1v1h-1zM360 286h1v1h-1zM446 286h1v1h-1zM87 287h1v1h-1zM199 287h1v1h-1zM277 287h1v1h-1zM360 287h1v1h-1zM446 287h1v1h-1zM557 287h1v1h-1zM84 288h1v1h-1zM87 288h1v1h-1zM196 288h1v1h-1zM199 288h1v1h-1zM277 288h1v1h-1zM364 288h1v1h-1zM445 288h1v1h-1zM557 288h1v1h-1zM84 289h1v1h-1zM196 289h1v1h-1zM277 289h1v1h-1zM364 289h1v1h-1zM445 289h1v1h-1zM557 289h1v1h-1zM85 290h1v1h-1zM197 290h1v1h-1zM276 290h1v1h-1zM362 290h1v1h-1zM365 290h1v1h-1zM444 290h1v1h-1zM556 290h1v1h-1zM276 291h1v1h-1zM362 291h1v1h-1zM441 291h1v1h-1zM444 291h1v1h-1zM553 291h1v1h-1zM556 291h1v1h-1zM88 292h1v1h-1zM201 292h1v1h-1zM275 292h1v1h-1zM363 292h1v1h-1zM440 292h1v1h-1zM443 292h1v1h-1zM553 292h1v1h-1zM88 293h1v1h-1zM201 293h1v1h-1zM440 293h1v1h-1zM553 293h1v1h-1zM89 294h1v1h-1zM199 294h1v1h-1zM367 294h1v1h-1zM439 294h1v1h-1zM552 294h1v1h-1zM86 295h1v1h-1zM199 295h1v1h-1zM277 295h1v1h-1zM367 295h1v1h-1zM439 295h1v1h-1zM552 295h1v1h-1zM86 296h1v1h-1zM276 296h1v1h-1zM365 296h1v1h-1zM86 297h1v1h-1zM204 297h1v1h-1zM276 297h1v1h-1zM365 297h1v1h-1zM437 297h1v1h-1zM555 297h1v1h-1zM90 298h1v1h-1zM204 298h1v1h-1zM437 298h1v1h-1zM554 298h1v1h-1zM90 299h1v1h-1zM554 299h1v1h-1zM90 300h1v1h-1zM203 300h1v1h-1zM273 300h1v1h-1zM368 300h1v1h-1zM554 300h1v1h-1zM87 301h1v1h-1zM273 301h1v1h-1zM368 301h1v1h-1zM554 301h1v1h-1zM88 302h1v1h-1zM550 302h1v1h-1zM553 302h1v1h-1zM88 303h1v1h-1zM550 303h1v1h-1zM92 304h1v1h-1zM549 304h1v1h-1zM92 305h1v1h-1zM549 305h1v1h-1zM92 306h1v1h-1zM267 306h2v1h-2zM373 306h1v1h-1zM549 306h1v1h-1zM90 307h1v1h-1zM378 307h2v1h-2zM427 307h2v1h-2zM548 307h1v1h-1zM90 308h1v1h-1zM216 309h2v1h-2zM424 309h2v1h-2zM94 310h1v1h-1zM214 310h1v1h-1zM257 310h1v1h-1zM262 310h2v1h-2zM383 310h2v1h-2zM422 310h2v1h-2zM550 310h1v1h-1zM95 311h1v1h-1zM215 311h2v1h-2zM221 311h1v1h-1zM255 311h2v1h-2zM261 311h1v1h-1zM381 311h1v1h-1zM421 311h1v1h-1zM550 311h1v1h-1zM92 312h1v1h-1zM95 312h1v1h-1zM222 312h2v1h-2zM253 312h2v1h-2zM382 312h2v1h-2zM388 312h1v1h-1zM423 312h1v1h-1zM549 312h1v1h-1zM92 313h1v1h-1zM219 313h2v1h-2zM227 313h1v1h-1zM251 313h2v1h-2zM389 313h2v1h-2zM414 313h1v1h-1zM421 313h2v1h-2zM549 313h1v1h-1zM93 314h1v1h-1zM221 314h1v1h-1zM228 314h2v1h-2zM245 314h1v1h-1zM253 314h1v1h-1zM386 314h3v1h-3zM394 314h3v1h-3zM410 314h4v1h-4zM418 314h3v1h-3zM548 314h1v1h-1zM225 315h2v1h-2zM233 315h4v1h-4zM241 315h4v1h-4zM250 315h3v1h-3zM401 315h4v1h-4zM409 315h1v1h-1zM417 315h1v1h-1zM545 315h1v1h-1zM548 315h1v1h-1zM97 316h1v1h-1zM227 316h1v1h-1zM248 316h2v1h-2zM392 316h4v1h-4zM411 316h1v1h-1zM544 316h1v1h-1zM547 316h1v1h-1zM97 317h1v1h-1zM231 317h4v1h-4zM239 317h4v1h-4zM399 317h4v1h-4zM407 317h4v1h-4zM544 317h1v1h-1zM95 318h1v1h-1zM543 318h1v1h-1zM95 319h1v1h-1zM543 319h1v1h-1zM542 320h1v1h-1zM99 321h1v1h-1zM542 321h1v1h-1zM100 322h1v1h-1zM541 322h1v1h-1zM97 323h1v1h-1zM100 323h1v1h-1zM98 324h1v1h-1zM98 325h1v1h-1zM543 325h1v1h-1zM542 326h1v1h-1zM103 327h1v1h-1zM542 327h1v1h-1zM100 328h1v1h-1zM103 328h1v1h-1zM541 328h1v1h-1zM100 329h1v1h-1zM541 329h1v1h-1zM105 331h1v1h-1zM539 331h1v1h-1zM105 332h1v1h-1zM536 332h1v1h-1zM539 332h1v1h-1zM104 334h1v1h-1zM534 334h1v1h-1zM537 334h1v1h-1zM104 335h1v1h-1zM534 335h1v1h-1zM109 337h1v1h-1zM532 337h1v1h-1zM106 338h1v1h-1zM109 338h1v1h-1zM532 338h1v1h-1zM113 342h1v1h-1zM528 342h1v1h-1zM528 343h1v1h-1zM524 347h1v1h-1zM117 351h1v1h-1zM472 351h1v1h-1zM478 351h3v1h-3zM117 352h1v1h-1zM470 352h2v1h-2zM524 352h1v1h-1zM475 353h4v1h-4zM123 354h1v1h-1zM468 354h1v1h-1zM484 354h1v1h-1zM123 355h1v1h-1zM468 355h1v1h-1zM484 355h1v1h-1zM482 356h1v1h-1zM466 357h1v1h-1zM482 357h1v1h-1zM486 358h1v1h-1zM469 359h1v1h-1zM486 359h1v1h-1zM469 360h1v1h-1zM486 360h1v1h-1zM469 361h1v1h-1zM483 361h1v1h-1zM486 361h1v1h-1zM466 362h1v1h-1zM469 362h1v1h-1zM483 362h1v1h-1zM466 363h1v1h-1zM482 363h1v1h-1zM129 364h2v1h-2zM482 364h1v1h-1zM512 364h1v1h-1zM135 365h1v1h-1zM506 365h1v1h-1zM273 366h1v1h-1zM271 367h2v1h-2zM277 367h1v1h-1zM477 367h3v1h-3zM503 367h2v1h-2zM134 368h2v1h-2zM470 368h2v1h-2zM140 369h2v1h-2zM269 369h1v1h-1zM275 369h2v1h-2zM478 369h1v1h-1zM500 369h2v1h-2zM138 370h1v1h-1zM269 370h1v1h-1zM276 370h1v1h-1zM475 370h3v1h-3zM139 371h2v1h-2zM497 371h2v1h-2zM145 372h2v1h-2zM272 372h1v1h-1zM280 372h1v1h-1zM496 372h1v1h-1zM143 373h1v1h-1zM272 373h1v1h-1zM279 373h1v1h-1zM498 373h1v1h-1zM144 374h2v1h-2zM150 374h1v1h-1zM273 374h1v1h-1zM279 374h1v1h-1zM496 374h2v1h-2zM151 375h2v1h-2zM494 375h2v1h-2zM148 376h2v1h-2zM276 376h2v1h-2zM487 376h1v1h-1zM492 376h2v1h-2zM150 377h1v1h-1zM155 377h2v1h-2zM485 377h2v1h-2zM491 377h1v1h-1zM157 378h1v1h-1zM483 378h2v1h-2zM154 379h2v1h-2zM161 379h1v1h-1zM481 379h2v1h-2zM162 380h2v1h-2zM483 380h1v1h-1zM159 381h2v1h-2zM481 381h2v1h-2zM161 382h1v1h-1zM167 382h3v1h-3zM472 382h2v1h-2zM479 382h2v1h-2zM165 383h1v1h-1zM469 383h3v1h-3zM477 383h2v1h-2zM166 384h2v1h-2zM173 384h3v1h-3zM468 384h1v1h-1zM171 385h1v1h-1zM470 385h1v1h-1zM172 386h2v1h-2zM179 386h3v1h-3zM459 386h3v1h-3zM467 386h3v1h-3zM177 387h2v1h-2zM185 387h2v1h-2zM457 387h2v1h-2zM465 387h2v1h-2zM179 388h1v1h-1zM187 388h1v1h-1zM451 388h1v1h-1zM183 389h3v1h-3zM191 389h3v1h-3zM448 389h3v1h-3zM456 389h3v1h-3zM446 390h2v1h-2zM454 390h2v1h-2zM190 391h3v1h-3zM198 391h3v1h-3zM196 392h1v1h-1zM439 392h1v1h-1zM445 392h3v1h-3zM197 393h2v1h-2zM203 393h3v1h-3zM436 393h3v1h-3zM443 393h2v1h-2zM202 394h1v1h-1zM434 394h2v1h-2zM203 395h2v1h-2zM209 395h1v1h-1zM433 395h1v1h-1zM210 396h2v1h-2zM435 396h1v1h-1zM207 397h2v1h-2zM433 397h2v1h-2zM209 398h1v1h-1zM431 398h2v1h-2zM215 399h2v1h-2zM429 399h2v1h-2zM214 401h1v1h-1zM219 401h1v1h-1zM422 401h1v1h-1zM427 401h1v1h-1zM218 404h2v1h-2zM223 405h2v1h-2zM417 405h2v1h-2zM232 413h1v1h-1zM409 413h1v1h-1zM232 414h1v1h-1zM409 414h1v1h-1zM233 419h1v1h-1zM404 419h1v1h-1zM240 423h1v1h-1zM405 423h1v1h-1zM238 425h1v1h-1zM403 425h1v1h-1zM403 426h1v1h-1zM242 427h1v1h-1zM402 427h1v1h-1zM242 428h1v1h-1zM402 428h1v1h-1zM240 429h1v1h-1zM401 429h1v1h-1zM240 430h1v1h-1zM398 430h1v1h-1zM401 430h1v1h-1zM240 431h1v1h-1zM397 431h1v1h-1zM244 432h1v1h-1zM397 432h1v1h-1zM244 433h1v1h-1zM397 433h1v1h-1zM242 434h1v1h-1zM245 434h1v1h-1zM396 434h1v1h-1zM242 435h1v1h-1zM396 435h1v1h-1zM242 436h1v1h-1zM246 438h1v1h-1zM398 438h1v1h-1zM246 439h1v1h-1zM398 439h1v1h-1zM244 440h1v1h-1zM247 440h1v1h-1zM397 440h1v1h-1zM244 441h1v1h-1zM397 441h1v1h-1zM244 442h1v1h-1zM394 442h1v1h-1zM397 442h1v1h-1zM393 443h1v1h-1zM396 443h1v1h-1zM248 444h1v1h-1zM393 444h1v1h-1zM248 445h1v1h-1zM393 445h1v1h-1zM248 446h1v1h-1zM393 446h1v1h-1zM246 447h1v1h-1zM392 447h1v1h-1zM246 448h1v1h-1zM246 449h1v1h-1zM395 449h1v1h-1zM395 450h1v1h-1zM250 451h1v1h-1zM394 451h1v1h-1zM250 452h1v1h-1zM394 452h1v1h-1zM247 453h1v1h-1zM250 453h1v1h-1zM391 453h1v1h-1zM394 453h1v1h-1zM247 454h1v1h-1zM391 454h1v1h-1zM247 455h1v1h-1zM390 455h1v1h-1zM390 456h1v1h-1zM251 457h1v1h-1zM390 457h1v1h-1zM251 458h1v1h-1zM251 459h1v1h-1zM393 459h1v1h-1zM248 460h1v1h-1zM251 460h1v1h-1zM393 460h1v1h-1zM249 461h1v1h-1zM319 461h4v1h-4zM392 461h1v1h-1zM249 462h1v1h-1zM392 462h1v1h-1zM318 463h3v1h-3zM389 463h1v1h-1zM392 463h1v1h-1zM252 464h1v1h-1zM316 464h2v1h-2zM324 464h1v1h-1zM389 464h1v1h-1zM252 465h1v1h-1zM389 465h1v1h-1zM252 466h1v1h-1zM314 466h1v1h-1zM389 466h1v1h-1zM249 467h1v1h-1zM252 467h1v1h-1zM314 467h1v1h-1zM329 467h1v1h-1zM249 468h1v1h-1zM313 468h1v1h-1zM330 468h1v1h-1zM392 468h1v1h-1zM249 469h1v1h-1zM313 469h1v1h-1zM327 469h1v1h-1zM330 469h1v1h-1zM392 469h1v1h-1zM249 470h1v1h-1zM310 470h1v1h-1zM313 470h1v1h-1zM327 470h1v1h-1zM392 470h1v1h-1zM310 471h1v1h-1zM327 471h1v1h-1zM389 471h1v1h-1zM392 471h1v1h-1zM252 472h1v1h-1zM310 472h1v1h-1zM327 472h1v1h-1zM389 472h1v1h-1zM252 473h1v1h-1zM310 473h1v1h-1zM389 473h1v1h-1zM252 474h1v1h-1zM314 474h1v1h-1zM389 474h1v1h-1zM249 475h1v1h-1zM252 475h1v1h-1zM314 475h1v1h-1zM329 475h1v1h-1zM249 476h1v1h-1zM392 476h1v1h-1zM249 477h1v1h-1zM392 477h1v1h-1zM249 478h1v1h-1zM318 478h4v1h-4zM392 478h1v1h-1zM325 479h1v1h-1zM389 479h1v1h-1zM392 479h1v1h-1zM252 480h1v1h-1zM317 480h3v1h-3zM389 480h1v1h-1zM252 481h1v1h-1zM389 481h1v1h-1zM252 482h1v1h-1zM389 482h1v1h-1zM251 483h1v1h-1zM393 483h1v1h-1zM248 484h1v1h-1zM251 484h1v1h-1zM393 484h1v1h-1zM248 485h1v1h-1zM393 485h1v1h-1zM248 486h1v1h-1zM390 486h1v1h-1zM393 486h1v1h-1zM248 487h1v1h-1zM390 487h1v1h-1zM247 488h1v1h-1zM390 488h1v1h-1zM250 490h1v1h-1zM394 490h1v1h-1zM250 491h1v1h-1zM394 491h1v1h-1zM250 492h1v1h-1zM394 492h1v1h-1zM249 493h1v1h-1zM392 493h1v1h-1zM246 494h1v1h-1zM249 494h1v1h-1zM392 494h1v1h-1zM246 495h1v1h-1zM392 495h1v1h-1zM246 496h1v1h-1zM245 497h1v1h-1zM396 497h1v1h-1zM245 498h1v1h-1zM396 498h1v1h-1zM393 499h1v1h-1zM396 499h1v1h-1zM248 500h1v1h-1zM393 500h1v1h-1zM247 501h1v1h-1zM394 501h1v1h-1zM247 502h1v1h-1zM247 503h1v1h-1zM398 503h1v1h-1zM246 504h1v1h-1zM398 504h1v1h-1zM243 505h1v1h-1zM246 505h1v1h-1zM395 505h1v1h-1zM398 505h1v1h-1zM242 506h1v1h-1zM395 506h1v1h-1zM242 507h1v1h-1zM396 507h1v1h-1zM242 508h1v1h-1zM241 509h1v1h-1zM400 509h1v1h-1zM241 510h1v1h-1zM400 510h1v1h-1zM240 511h1v1h-1zM398 511h1v1h-1zM398 512h1v1h-1zM243 513h1v1h-1zM398 513h1v1h-1zM402 514h1v1h-1zM241 515h1v1h-1zM403 515h1v1h-1zM241 516h1v1h-1zM400 516h1v1h-1zM403 516h1v1h-1zM240 517h1v1h-1zM401 517h1v1h-1zM240 518h1v1h-1zM401 518h1v1h-1zM238 520h1v1h-1zM406 520h1v1h-1zM235 521h1v1h-1zM238 521h1v1h-1zM403 521h1v1h-1zM406 521h1v1h-1zM236 523h1v1h-1zM232 524h1v1h-1zM409 524h1v1h-1zM232 525h1v1h-1zM409 525h1v1h-1zM224 532h2v1h-2zM416 532h2v1h-2zM224 535h1v1h-1zM416 535h1v1h-1zM220 536h1v1h-1zM421 536h2v1h-2zM219 539h2v1h-2zM426 540h2v1h-2zM214 543h2v1h-2zM430 543h2v1h-2zM210 546h2v1h-2zM434 546h2v1h-2zM202 549h1v1h-1zM207 549h1v1h-1zM434 549h1v1h-1zM439 549h1v1h-1zM199 551h2v1h-2zM437 551h2v1h-2zM195 554h2v1h-2zM442 554h1v1h-1zM445 554h1v1h-1zM192 556h2v1h-2zM448 556h2v1h-2zM190 558h1v1h-1zM193 558h1v1h-1zM447 558h2v1h-2zM190 560h2v1h-2zM454 560h2v1h-2zM187 562h2v1h-2zM453 562h1v1h-1zM458 562h1v1h-1zM184 564h2v1h-2zM456 564h2v1h-2zM178 565h1v1h-1zM463 565h1v1h-1zM182 566h1v1h-1zM175 567h2v1h-2zM462 568h2v1h-2zM172 569h2v1h-2zM468 569h2v1h-2zM169 571h2v1h-2zM467 571h2v1h-2zM168 572h1v1h-1zM473 572h2v1h-2zM170 573h1v1h-1zM471 573h1v1h-1zM167 575h2v1h-2zM165 576h2v1h-2zM476 576h1v1h-1zM161 579h2v1h-2zM483 579h2v1h-2zM153 582h1v1h-1zM158 582h1v1h-1zM487 582h2v1h-2zM149 585h2v1h-2zM491 585h2v1h-2zM145 588h2v1h-2zM491 588h1v1h-1zM496 588h1v1h-1zM141 591h2v1h-2zM495 591h2v1h-2zM138 594h1v1h-1zM141 594h1v1h-1zM499 594h2v1h-2zM138 596h2v1h-2zM134 599h2v1h-2zM510 599h2v1h-2zM130 602h2v1h-2zM514 602h2v1h-2zM122 605h1v1h-1zM127 605h1v1h-1zM514 605h1v1h-1zM519 605h1v1h-1zM118 608h2v1h-2zM518 608h2v1h-2zM114 611h2v1h-2zM522 611h2v1h-2zM110 614h2v1h-2zM108 616h1v1h-1zM111 616h1v1h-1zM533 616h2v1h-2zM107 619h2v1h-2zM98 628h1v1h-1zM280 628h3v1h-3zM360 628h2v1h-2zM98 629h1v1h-1zM543 629h1v1h-1zM94 630h1v1h-1zM278 630h1v1h-1zM358 630h1v1h-1zM96 631h1v1h-1zM280 631h1v1h-1zM358 631h1v1h-1zM92 632h1v1h-1zM278 632h2v1h-2zM358 632h1v1h-1zM366 632h2v1h-2zM549 632h1v1h-1zM92 633h1v1h-1zM283 633h1v1h-1zM358 633h1v1h-1zM549 633h1v1h-1zM91 634h1v1h-1zM283 634h1v1h-1zM547 634h1v1h-1zM91 635h1v1h-1zM274 635h2v1h-2zM283 635h1v1h-1zM361 635h1v1h-1zM370 635h2v1h-2zM547 635h1v1h-1zM90 636h1v1h-1zM280 636h1v1h-1zM283 636h1v1h-1zM361 636h1v1h-1zM90 637h1v1h-1zM271 637h2v1h-2zM280 637h1v1h-1zM361 637h1v1h-1zM369 637h2v1h-2zM551 637h1v1h-1zM89 638h1v1h-1zM280 638h1v1h-1zM358 638h1v1h-1zM361 638h1v1h-1zM552 638h1v1h-1zM280 639h1v1h-1zM358 639h1v1h-1zM549 639h1v1h-1zM552 639h1v1h-1zM263 640h1v1h-1zM268 640h1v1h-1zM358 640h1v1h-1zM373 640h2v1h-2zM550 640h1v1h-1zM91 641h1v1h-1zM283 641h1v1h-1zM358 641h1v1h-1zM550 641h1v1h-1zM90 642h1v1h-1zM283 642h1v1h-1zM554 642h1v1h-1zM90 643h1v1h-1zM259 643h2v1h-2zM283 643h1v1h-1zM361 643h1v1h-1zM377 643h2v1h-2zM554 643h1v1h-1zM90 644h1v1h-1zM136 644h4v1h-4zM144 644h1v1h-1zM280 644h1v1h-1zM283 644h1v1h-1zM361 644h1v1h-1zM497 644h3v1h-3zM504 644h3v1h-3zM554 644h1v1h-1zM89 645h1v1h-1zM135 645h1v1h-1zM145 645h2v1h-2zM256 645h2v1h-2zM280 645h1v1h-1zM361 645h1v1h-1zM384 645h2v1h-2zM495 645h2v1h-2zM552 645h1v1h-1zM86 646h1v1h-1zM89 646h1v1h-1zM137 646h1v1h-1zM142 646h2v1h-2zM280 646h1v1h-1zM358 646h1v1h-1zM361 646h1v1h-1zM494 646h1v1h-1zM502 646h4v1h-4zM510 646h1v1h-1zM552 646h1v1h-1zM86 647h1v1h-1zM134 647h3v1h-3zM144 647h1v1h-1zM280 647h1v1h-1zM358 647h1v1h-1zM496 647h1v1h-1zM511 647h2v1h-2zM552 647h1v1h-1zM85 648h1v1h-1zM132 648h2v1h-2zM148 648h1v1h-1zM151 648h1v1h-1zM252 648h2v1h-2zM358 648h1v1h-1zM388 648h2v1h-2zM494 648h2v1h-2zM508 648h2v1h-2zM556 648h1v1h-1zM85 649h1v1h-1zM283 649h1v1h-1zM358 649h1v1h-1zM492 649h2v1h-2zM510 649h1v1h-1zM556 649h1v1h-1zM85 650h1v1h-1zM250 650h1v1h-1zM253 650h1v1h-1zM283 650h1v1h-1zM387 650h2v1h-2zM556 650h1v1h-1zM155 651h1v1h-1zM283 651h1v1h-1zM361 651h1v1h-1zM553 651h1v1h-1zM556 651h1v1h-1zM88 652h1v1h-1zM155 652h1v1h-1zM280 652h1v1h-1zM283 652h1v1h-1zM361 652h1v1h-1zM489 652h1v1h-1zM514 652h1v1h-1zM553 652h1v1h-1zM87 653h1v1h-1zM127 653h1v1h-1zM153 653h1v1h-1zM249 653h2v1h-2zM280 653h1v1h-1zM361 653h1v1h-1zM391 653h2v1h-2zM489 653h1v1h-1zM514 653h1v1h-1zM554 653h1v1h-1zM87 654h1v1h-1zM127 654h1v1h-1zM153 654h1v1h-1zM280 654h1v1h-1zM358 654h1v1h-1zM361 654h1v1h-1zM488 654h1v1h-1zM518 654h1v1h-1zM87 655h1v1h-1zM126 655h1v1h-1zM157 655h1v1h-1zM246 655h2v1h-2zM280 655h1v1h-1zM358 655h1v1h-1zM398 655h2v1h-2zM488 655h1v1h-1zM519 655h1v1h-1zM557 655h1v1h-1zM84 656h1v1h-1zM87 656h1v1h-1zM126 656h1v1h-1zM157 656h1v1h-1zM358 656h1v1h-1zM484 656h1v1h-1zM487 656h1v1h-1zM516 656h1v1h-1zM519 656h1v1h-1zM557 656h1v1h-1zM84 657h1v1h-1zM125 657h1v1h-1zM155 657h1v1h-1zM158 657h1v1h-1zM283 657h1v1h-1zM358 657h1v1h-1zM484 657h1v1h-1zM516 657h1v1h-1zM557 657h1v1h-1zM84 658h1v1h-1zM122 658h1v1h-1zM125 658h1v1h-1zM155 658h1v1h-1zM242 658h2v1h-2zM283 658h1v1h-1zM402 658h2v1h-2zM483 658h1v1h-1zM516 658h1v1h-1zM554 658h1v1h-1zM557 658h1v1h-1zM84 659h1v1h-1zM122 659h1v1h-1zM155 659h1v1h-1zM283 659h1v1h-1zM361 659h1v1h-1zM483 659h1v1h-1zM554 659h1v1h-1zM122 660h1v1h-1zM155 660h1v1h-1zM235 660h1v1h-1zM240 660h1v1h-1zM280 660h1v1h-1zM283 660h1v1h-1zM361 660h1v1h-1zM401 660h2v1h-2zM483 660h1v1h-1zM520 660h1v1h-1zM554 660h1v1h-1zM87 661h1v1h-1zM121 661h1v1h-1zM159 661h1v1h-1zM280 661h1v1h-1zM361 661h1v1h-1zM520 661h1v1h-1zM554 661h1v1h-1zM87 662h1v1h-1zM121 662h1v1h-1zM159 662h1v1h-1zM280 662h1v1h-1zM358 662h1v1h-1zM361 662h1v1h-1zM486 662h1v1h-1zM520 662h1v1h-1zM87 663h1v1h-1zM125 663h1v1h-1zM159 663h1v1h-1zM231 663h2v1h-2zM280 663h1v1h-1zM358 663h1v1h-1zM405 663h2v1h-2zM486 663h1v1h-1zM517 663h1v1h-1zM520 663h1v1h-1zM557 663h1v1h-1zM84 664h1v1h-1zM87 664h1v1h-1zM125 664h1v1h-1zM158 664h1v1h-1zM358 664h1v1h-1zM486 664h1v1h-1zM517 664h1v1h-1zM557 664h1v1h-1zM84 665h1v1h-1zM125 665h1v1h-1zM155 665h1v1h-1zM158 665h1v1h-1zM283 665h1v1h-1zM358 665h1v1h-1zM483 665h1v1h-1zM486 665h1v1h-1zM517 665h1v1h-1zM557 665h1v1h-1zM84 666h1v1h-1zM122 666h1v1h-1zM125 666h1v1h-1zM155 666h1v1h-1zM227 666h2v1h-2zM283 666h1v1h-1zM413 666h1v1h-1zM483 666h1v1h-1zM516 666h1v1h-1zM554 666h1v1h-1zM557 666h1v1h-1zM84 667h1v1h-1zM122 667h1v1h-1zM155 667h1v1h-1zM283 667h1v1h-1zM361 667h1v1h-1zM484 667h1v1h-1zM516 667h1v1h-1zM554 667h1v1h-1zM123 668h1v1h-1zM154 668h1v1h-1zM224 668h2v1h-2zM280 668h1v1h-1zM283 668h1v1h-1zM361 668h1v1h-1zM416 668h2v1h-2zM554 668h1v1h-1zM87 669h1v1h-1zM154 669h1v1h-1zM280 669h1v1h-1zM361 669h1v1h-1zM488 669h1v1h-1zM519 669h1v1h-1zM554 669h1v1h-1zM87 670h1v1h-1zM127 670h1v1h-1zM153 670h1v1h-1zM280 670h1v1h-1zM358 670h1v1h-1zM361 670h1v1h-1zM488 670h1v1h-1zM518 670h1v1h-1zM88 671h1v1h-1zM127 671h1v1h-1zM221 671h1v1h-1zM224 671h1v1h-1zM280 671h1v1h-1zM358 671h1v1h-1zM416 671h1v1h-1zM421 671h1v1h-1zM485 671h1v1h-1zM518 671h1v1h-1zM557 671h1v1h-1zM85 672h1v1h-1zM125 672h1v1h-1zM358 672h1v1h-1zM556 672h1v1h-1zM85 673h1v1h-1zM125 673h1v1h-1zM155 673h1v1h-1zM221 673h2v1h-2zM283 673h1v1h-1zM358 673h1v1h-1zM419 673h2v1h-2zM556 673h1v1h-1zM85 674h1v1h-1zM283 674h1v1h-1zM556 674h1v1h-1zM283 675h1v1h-1zM315 675h2v1h-2zM322 675h3v1h-3zM361 675h1v1h-1zM492 675h1v1h-1zM553 675h1v1h-1zM556 675h1v1h-1zM89 676h1v1h-1zM128 676h2v1h-2zM147 676h1v1h-1zM152 676h1v1h-1zM217 676h2v1h-2zM280 676h1v1h-1zM283 676h1v1h-1zM312 676h3v1h-3zM328 676h1v1h-1zM361 676h1v1h-1zM424 676h1v1h-1zM427 676h1v1h-1zM552 676h1v1h-1zM89 677h1v1h-1zM135 677h2v1h-2zM144 677h3v1h-3zM280 677h1v1h-1zM319 677h4v1h-4zM329 677h2v1h-2zM361 677h1v1h-1zM496 677h2v1h-2zM506 677h1v1h-1zM511 677h2v1h-2zM552 677h1v1h-1zM86 678h1v1h-1zM89 678h1v1h-1zM137 678h1v1h-1zM142 678h2v1h-2zM214 678h2v1h-2zM280 678h1v1h-1zM310 678h1v1h-1zM313 678h1v1h-1zM326 678h2v1h-2zM358 678h1v1h-1zM361 678h1v1h-1zM430 678h2v1h-2zM494 678h1v1h-1zM502 678h4v1h-4zM510 678h1v1h-1zM552 678h1v1h-1zM86 679h1v1h-1zM133 679h3v1h-3zM280 679h1v1h-1zM328 679h1v1h-1zM358 679h1v1h-1zM495 679h2v1h-2zM552 679h1v1h-1zM87 680h1v1h-1zM140 680h4v1h-4zM358 680h1v1h-1zM500 680h4v1h-4zM551 680h1v1h-1zM206 681h1v1h-1zM211 681h1v1h-1zM283 681h1v1h-1zM358 681h1v1h-1zM430 681h1v1h-1zM435 681h1v1h-1zM91 682h1v1h-1zM283 682h1v1h-1zM332 682h1v1h-1zM554 682h1v1h-1zM91 683h1v1h-1zM203 683h2v1h-2zM283 683h1v1h-1zM305 683h1v1h-1zM332 683h1v1h-1zM361 683h1v1h-1zM433 683h2v1h-2zM553 683h1v1h-1zM88 684h1v1h-1zM91 684h1v1h-1zM280 684h1v1h-1zM283 684h1v1h-1zM304 684h1v1h-1zM307 684h1v1h-1zM336 684h1v1h-1zM361 684h1v1h-1zM553 684h1v1h-1zM89 685h1v1h-1zM280 685h1v1h-1zM304 685h1v1h-1zM337 685h1v1h-1zM361 685h1v1h-1zM552 685h1v1h-1zM89 686h1v1h-1zM199 686h2v1h-2zM280 686h1v1h-1zM303 686h1v1h-1zM334 686h1v1h-1zM337 686h1v1h-1zM358 686h1v1h-1zM361 686h1v1h-1zM438 686h1v1h-1zM441 686h1v1h-1zM552 686h1v1h-1zM93 687h1v1h-1zM280 687h1v1h-1zM303 687h1v1h-1zM334 687h1v1h-1zM358 687h1v1h-1zM551 687h1v1h-1zM93 688h1v1h-1zM196 688h2v1h-2zM303 688h1v1h-1zM335 688h1v1h-1zM358 688h1v1h-1zM444 688h2v1h-2zM548 688h1v1h-1zM551 688h1v1h-1zM91 689h1v1h-1zM94 689h1v1h-1zM283 689h1v1h-1zM302 689h1v1h-1zM358 689h1v1h-1zM547 689h1v1h-1zM550 689h1v1h-1zM91 690h1v1h-1zM283 690h1v1h-1zM338 690h1v1h-1zM547 690h1v1h-1zM193 691h1v1h-1zM196 691h1v1h-1zM283 691h1v1h-1zM305 691h1v1h-1zM338 691h1v1h-1zM361 691h1v1h-1zM444 691h1v1h-1zM449 691h1v1h-1zM96 692h1v1h-1zM280 692h1v1h-1zM283 692h1v1h-1zM305 692h1v1h-1zM338 692h1v1h-1zM361 692h1v1h-1zM545 692h1v1h-1zM96 693h1v1h-1zM280 693h1v1h-1zM305 693h1v1h-1zM335 693h1v1h-1zM338 693h1v1h-1zM361 693h1v1h-1zM545 693h1v1h-1zM192 694h2v1h-2zM280 694h1v1h-1zM302 694h1v1h-1zM305 694h1v1h-1zM335 694h1v1h-1zM358 694h1v1h-1zM361 694h1v1h-1zM448 694h2v1h-2zM95 695h1v1h-1zM280 695h1v1h-1zM302 695h1v1h-1zM335 695h1v1h-1zM358 695h1v1h-1zM95 696h1v1h-1zM189 696h2v1h-2zM303 696h1v1h-1zM335 696h1v1h-1zM358 696h1v1h-1zM452 696h1v1h-1zM455 696h1v1h-1zM542 696h1v1h-1zM99 697h1v1h-1zM283 697h1v1h-1zM334 697h1v1h-1zM358 697h1v1h-1zM542 697h1v1h-1zM284 698h1v1h-1zM306 698h1v1h-1zM357 698h1v1h-1zM185 699h2v1h-2zM281 699h1v1h-1zM284 699h1v1h-1zM307 699h1v1h-1zM337 699h1v1h-1zM459 699h2v1h-2zM281 700h1v1h-1zM304 700h1v1h-1zM307 700h1v1h-1zM336 700h1v1h-1zM360 700h1v1h-1zM178 701h1v1h-1zM183 701h1v1h-1zM281 701h1v1h-1zM305 701h1v1h-1zM336 701h1v1h-1zM360 701h1v1h-1zM458 701h1v1h-1zM463 701h1v1h-1zM281 702h1v1h-1zM305 702h1v1h-1zM360 702h1v1h-1zM285 703h1v1h-1zM359 703h1v1h-1zM174 704h2v1h-2zM285 704h1v1h-1zM356 704h1v1h-1zM359 704h1v1h-1zM462 704h2v1h-2zM534 704h2v1h-2zM285 705h1v1h-1zM356 705h1v1h-1zM171 706h2v1h-2zM283 706h1v1h-1zM309 706h1v1h-1zM314 706h2v1h-2zM355 706h1v1h-1zM466 706h1v1h-1zM469 706h1v1h-1zM106 707h2v1h-2zM283 707h1v1h-1zM316 707h1v1h-1zM321 707h4v1h-4zM329 707h2v1h-2zM355 707h1v1h-1zM530 707h2v1h-2zM112 708h2v1h-2zM168 708h2v1h-2zM283 708h1v1h-1zM312 708h3v1h-3zM328 708h1v1h-1zM354 708h1v1h-1zM472 708h2v1h-2zM528 708h2v1h-2zM287 709h1v1h-1zM322 709h1v1h-1zM354 709h1v1h-1zM166 710h1v1h-1zM169 710h1v1h-1zM287 710h1v1h-1zM319 710h3v1h-3zM471 710h2v1h-2zM526 710h1v1h-1zM112 711h1v1h-1zM117 711h2v1h-2zM285 711h1v1h-1zM477 711h3v1h-3zM528 711h1v1h-1zM119 712h1v1h-1zM166 712h2v1h-2zM285 712h1v1h-1zM356 712h1v1h-1zM526 712h2v1h-2zM116 713h2v1h-2zM123 713h2v1h-2zM157 713h2v1h-2zM163 713h3v1h-3zM476 713h3v1h-3zM483 713h2v1h-2zM517 713h2v1h-2zM524 713h2v1h-2zM125 714h1v1h-1zM154 714h3v1h-3zM162 714h1v1h-1zM354 714h1v1h-1zM485 714h1v1h-1zM514 714h3v1h-3zM522 714h2v1h-2zM121 715h3v1h-3zM129 715h4v1h-4zM153 715h1v1h-1zM291 715h1v1h-1zM354 715h1v1h-1zM481 715h3v1h-3zM489 715h4v1h-4zM513 715h1v1h-1zM136 716h4v1h-4zM144 716h4v1h-4zM155 716h1v1h-1zM291 716h1v1h-1zM496 716h4v1h-4zM504 716h4v1h-4zM515 716h1v1h-1zM127 717h4v1h-4zM151 717h4v1h-4zM487 717h4v1h-4zM511 717h4v1h-4zM134 718h4v1h-4zM142 718h4v1h-4zM494 718h4v1h-4zM502 718h4v1h-4zM298 722h1v1h-1zM297 725h2v1h-2zM343 725h2v1h-2zM303 726h2v1h-2zM337 726h1v1h-1zM301 727h1v1h-1zM334 727h3v1h-3zM341 727h1v1h-1zM302 728h2v1h-2zM308 728h3v1h-3zM332 728h2v1h-2zM307 730h3v1h-3zM315 730h3v1h-3zM322 730h4v1h-4zM332 730h2v1h-2zM313 731h1v1h-1zM329 731h3v1h-3zM314 732h2v1h-2zM320 732h4v1h-4z" fill="#000"/></svg>
</div>
<div id="dlgsh"></div>
<div id="dlg">
<div class="tb"></div>
<svg class="wil" width="18" height="14" viewBox="0 0 18 14" style="left:6px;top:5px">
<path d="M1 4.2 L3.2 5.2 L5 4.4 L6.6 5 L8.4 3.6 L9.6 1.4 L11 1 L11.4 3.4 L12.6 5.2 L12.4 7.4 L10.6 9 L8 9.6 L5.4 9 L3.4 7.6 L2.2 6.4 Z" fill="#4a443c"/>
<path d="M11.6 8 L14.6 11.6" stroke="#8a8578" stroke-width="1" fill="none"/>
<circle cx="6.4" cy="6" r="1" fill="#e8e4dc"/><circle cx="9" cy="5.6" r="1" fill="#e8e4dc"/>
<path d="M1 4.2 L3.4 5.4 L2.4 6.4 Z" fill="#1e1c18"/></svg>
<div class="t tt" style="left:24px;top:6px;font-size:12px;">Ebenen vereinen</div>
<div class="hd"></div>
<svg width="28" height="26" viewBox="0 0 28 26" style="left:3px;top:27px">
<g fill="#eeeeee"><path d="M5.4 3.2 L15 3.2 L10.8 8 L1.2 8 Z"/><path d="M5.4 10.6 L15 10.6 L10.8 15.4 L1.2 15.4 Z"/><path d="M5.4 18 L15 18 L10.8 22.8 L1.2 22.8 Z"/></g>
<path d="M19.6 4.4 L19.6 18" stroke="#f09a2c" stroke-width="2.2" fill="none"/><path d="M15.4 14.6 L19.6 21.8 L23.8 14.6 L22 14.2 L19.6 18 L17.2 14.2 Z" fill="#f09a2c"/></svg>
<div class="t h1" style="left:33px;top:30px;font-size:16px;">Ebenen-vereinen-Eigenschaften</div>
<div class="t h2" style="left:33px;top:49px;font-size:11px;">[Unbenannt] (exportiert)-1</div>
<div class="t lbl b" style="left:12px;top:78px;font-size:13px;">Die vereinte Ebene sollte sein:</div>
<div class="radio" style="left:30px;top:97px"></div>
<div class="rdot" style="left:33.5px;top:100.5px"></div>
<div class="focus" style="left:47px;top:95px;width:145px;height:18px"></div>
<div class="t lbl dim" style="left:48px;top:97px;font-size:13px;">Nach Bedarf erweitert</div>
<div class="radio" style="left:30px;top:117px"></div>
<div class="t lbl" style="left:48px;top:117px;font-size:13px;">Auf Bild beschnitten</div>
<div class="radio" style="left:30px;top:137px"></div>
<div class="t lbl" style="left:48px;top:137px;font-size:13px;">Auf unterste Ebene beschnitten</div>
<div class="chk" style="left:14px;top:168px"></div>
<svg width="13" height="13" viewBox="0 0 13 13" style="left:14px;top:168px"><path d="M3.4 3.4 L9.6 9.6 M9.6 3.4 L3.4 9.6" stroke="#fff" stroke-width="2.3" stroke-linecap="square" fill="none"/></svg>
<div class="t lbl dim" style="left:32px;top:168px;font-size:13px;">Nur mit aktiver Gruppe vereinen</div>
<div class="chk" style="left:14px;top:199px"></div>
<div class="t lbl" style="left:32px;top:199px;font-size:13px;">Unsichtbare Ebenen löschen</div>
<div class="btn" style="left:12px;top:239px;width:87px"><span>Hilfe</span></div>
<div class="btn" style="left:169px;top:239px;width:87px"><span>Vereinen</span></div>
<div class="btn" style="left:262px;top:239px;width:87px"><span>Abbrechen</span></div>
</div>
<div id="pn">
<div style="left:0px;top:0px;width:1px;height:808px;background:#5b5b5b"></div>
<div style="left:65px;top:0px;width:171px;height:12px;background:#252525"></div>
<div style="left:64px;top:0px;width:1px;height:13px;background:#5b5b5b"></div>
<div style="left:65px;top:12px;width:201px;height:1px;background:#5b5b5b"></div>
<div style="left:123px;top:0px;width:1px;height:12px;background:#3a3a3a"></div>
<div style="left:177px;top:0px;width:1px;height:12px;background:#3a3a3a"></div>
<svg width="14" height="16" viewBox="0 0 14 16" style="left:2px;top:-8.5px"><path d="M2 2 H12.4 L11.4 15 H1 Z" fill="#e8e8e8"/><path d="M2 8.5 H11.6 M2 11.5 H11.4" stroke="#b0b0b0" stroke-width="1"/></svg>
<svg width="14" height="16" viewBox="0 0 14 16" style="left:66px;top:-6.5px"><rect x="1" y="1" width="11" height="4" rx="1" fill="#d03030"/><rect x="1" y="5" width="11" height="5" fill="#58b818"/><rect x="1" y="10" width="11" height="4" rx="1.5" fill="#5078d0"/></svg>
<svg width="14" height="16" viewBox="0 0 14 16" style="left:125px;top:-6px"><path d="M2 13 C2 6 12 6 12 13" stroke="#5a82b8" stroke-width="1.2" fill="none"/><rect x="1" y="4" width="3" height="3" fill="#e8e8e8"/><rect x="5.5" y="4" width="3" height="3" fill="#e8e8e8"/><rect x="10" y="4" width="3" height="3" fill="#e8e8e8"/></svg>
<svg width="14" height="16" viewBox="0 0 14 16" style="left:178px;top:-5px"><path d="M4 8.5 H9.5 C12.5 8.5 12.5 13 9.5 13 H8" stroke="#e0d020" stroke-width="1.8" fill="none"/><path d="M5.5 5.5 L1.5 8.5 L5.5 11.5 Z" fill="#e0d020"/></svg>
<div class="t pt" style="left:18px;top:-5px;font-size:11px;">Ebenen</div>
<div class="t pt" style="left:81px;top:-5px;font-size:11px;">Kanäle</div>
<div class="t pt" style="left:140px;top:-5px;font-size:11px;">Pfade</div>
<div class="t pt" style="left:193px;top:-5px;font-size:11px;">Journal</div>
<div class="dk" style="left:3px;top:16px;width:233px;height:26px;"></div>
<div class="t pt" style="left:10px;top:23px;font-size:11px;">Modus</div>
<div class="t pt" style="left:170px;top:23px;font-size:11px;">Normal</div>
<svg width="14" height="8" style="left:216px;top:24px" viewBox="0 0 14 8"><path d="M1 1 L7 6.6 L13 1" stroke="#e6e6e6" stroke-width="1.5" fill="none"/></svg>
<div class="dk" style="left:237px;top:16px;width:40px;height:26px;"></div>
<svg width="14" height="14" viewBox="0 0 14 14" style="left:241px;top:22px"><path d="M4.4 3.6 A4.6 4.6 0 1 1 6.4 11.8" stroke="#f0a020" stroke-width="1.8" fill="none"/><path d="M1.6 5.6 L6.6 1.2 L6.6 6.6 Z" fill="#f0a020"/><circle cx="3.6" cy="10.6" r="1.7" fill="#5080e0"/></svg>
<svg width="14" height="8" style="left:260px;top:24px" viewBox="0 0 14 8"><path d="M1 1 L7 6.6 L13 1" stroke="#e6e6e6" stroke-width="1.5" fill="none"/></svg>
<div style="left:3px;top:43px;width:270px;height:17px;background:#5a5a5a;border:1px solid #8c8c8c"></div>
<div class="t pt" style="left:5px;top:46px;font-size:11px;">Deckkraft</div>
<div class="t pt" style="left:234px;top:46px;font-size:11px;">100.0</div>
<div class="t pt" style="left:3px;top:67px;font-size:11px;">Sperre:</div>
<svg width="16" height="16" viewBox="0 0 16 16" style="left:48px;top:64.5px"><path d="M12.6 1.4 L14.2 3 L8.4 10.2 L6.6 8.6 Z" fill="#b07c2c"/><path d="M12.9 2 L13.6 2.7 L8.6 9 L7.9 8.4 Z" fill="#e0b060"/><path d="M6.6 8.6 L8.4 10.2 L7 11.8 L5.4 10.4 Z" fill="#f0f0f0"/><path d="M5.4 10.4 L7 11.8 C6 13.8 3.6 14.4 1.4 14.2 C3 13.4 3.8 11.6 5.4 10.4 Z" fill="#050505"/></svg>
<svg width="14" height="14" viewBox="0 0 14 14" style="left:72px;top:65px"><circle cx="7" cy="7" r="5.2" fill="#1f3458" opacity=".75"/><path d="M7.5 1.5 V13 M2 7.5 H13" stroke="#7d9bd6" stroke-width="1" fill="none"/></svg>
<svg width="14" height="14" viewBox="0 0 14 14" style="left:97px;top:65.5px"><rect x="0.5" y="0.5" width="13" height="13" rx="2.5" fill="#5a5a5a"/><g fill="#e4e4e4"><rect x="1" y="1" width="3" height="3" rx="1"/><rect x="7" y="1" width="3" height="3" rx="1"/><rect x="4" y="4" width="3" height="3" rx="1"/><rect x="10" y="4" width="3" height="3" rx="1"/><rect x="1" y="7" width="3" height="3" rx="1"/><rect x="7" y="7" width="3" height="3" rx="1"/><rect x="4" y="10" width="3" height="3" rx="1"/><rect x="10" y="10" width="3" height="3" rx="1"/></g></svg>
<div style="left:3px;top:85px;width:263px;height:299px;background:#2d2d2d"></div>
<div style="left:3px;top:85px;width:263px;height:40px;background:#1f1f1f"></div>
<svg width="18" height="12" viewBox="0 0 18 12" style="left:9px;top:99px"><path d="M1 6 C4 1.2 14 1.2 17 6 C14 10.8 4 10.8 1 6 Z" fill="#f4f4f4"/><circle cx="9" cy="6" r="4" fill="#2e62b4"/><circle cx="9" cy="6" r="1.6" fill="#0c1c40"/></svg>
<svg width="18" height="12" viewBox="0 0 18 12" style="left:9px;top:139px"><path d="M1 6 C4 1.2 14 1.2 17 6 C14 10.8 4 10.8 1 6 Z" fill="#f4f4f4"/><circle cx="9" cy="6" r="4" fill="#2e62b4"/><circle cx="9" cy="6" r="1.6" fill="#0c1c40"/></svg>
<div style="left:79px;top:87px;width:32px;height:36px;background:#fff"></div>
<div style="left:79px;top:127px;width:32px;height:36px;border:2px solid #000;background-color:#999;background-image:conic-gradient(#777 25%,#999 0 50%,#777 0 75%,#999 0);background-size:8px 8px;background-position:-2px 0"></div>
<div class="t pt" style="left:115px;top:99px;font-size:11px;">Blätter #1</div>
<div class="t pt" style="left:115px;top:139px;font-size:11px;">Blätter</div>
<svg width="16" height="16" viewBox="0 0 16 16" style="left:11px;top:387px"><path d="M3 2 H10.5 L14 5.5 V15 H3 Z" fill="#ececec"/><path d="M10.5 2 V5.5 H14 Z" fill="#bdbdbd"/><path d="M5.3 2.8 V7.6 M2.9 5.2 H7.7" stroke="#0a0a0a" stroke-width="1.3"/></svg>
<svg width="16" height="16" viewBox="0 0 16 16" style="left:46px;top:387px"><path d="M1.5 3.6 H7 L8.5 5.2 H14.5 V14 H1.5 Z" fill="#5a90d8"/><path d="M1.5 6.6 H14.5 V14 H1.5 Z" fill="#78a8e4"/><path d="M8.6 4.6 H13.6 V5.6 H8.6 Z" fill="#e8f0fc"/><path d="M4.6 2.8 V7.6 M2.2 5.2 H7" stroke="#0a0a0a" stroke-width="1.3"/></svg>
<svg width="16" height="16" viewBox="0 0 16 16" style="left:79.59999999999991px;top:387.5px"><path d="M2.2 11.2 L8.2 4.6 L14.2 11.2" stroke="#d8ccb8" stroke-width="1.7" stroke-dasharray="1.1 .7" fill="none"/><path d="M3.2 12 L8.2 6.6 L13.2 12" stroke="#6a5440" stroke-width="1" fill="none" opacity=".7"/></svg>
<svg width="16" height="16" viewBox="0 0 16 16" style="left:113px;top:387.5px"><path d="M2.4 4.8 L8 10.4 L13.6 4.8" stroke="#f08a1a" stroke-width="2.3" fill="none"/></svg>
<svg width="16" height="16" viewBox="0 0 16 16" style="left:148px;top:388px"><rect x="4.5" y="5" width="8.5" height="8.5" fill="#3a70c8" stroke="#78a4e8" stroke-width="1"/><rect x="1.5" y="1.5" width="6.5" height="6.5" fill="#a8c4f0" stroke="#78a4e8" stroke-width="1"/></svg>
<svg width="16" height="16" viewBox="0 0 16 16" style="left:182px;top:388px"><g fill="#f0f0f0"><path d="M3.6 2 L9.6 2 L7 4.8 L1 4.8 Z"/><path d="M3.6 6.4 L9.6 6.4 L7 9.2 L1 9.2 Z"/><path d="M3.6 10.8 L9.6 10.8 L7 13.6 L1 13.6 Z"/></g><path d="M11.8 1 V10" stroke="#f09a2c" stroke-width="2"/><path d="M9.4 8.4 L11.8 13 L14.2 8.4 Z" fill="#f09a2c"/></svg>
<svg width="16" height="16" viewBox="0 0 16 16" style="left:216px;top:388px"><path d="M2 2 H8.6 V7.4 H14.4 L12.6 14 H1 L2.8 8.6 H2 Z" fill="#e8e8e8"/><path d="M3.8 3.8 H7 V6.2 C7 7.6 3.8 7.6 3.8 6.2 Z" fill="#a0a0a0"/><path d="M6 9.4 H11.6 L10.8 12.4 H5 Z" fill="#cfcfcf"/></svg>
<svg width="16" height="16" viewBox="0 0 16 16" style="left:253px;top:387.5px"><path d="M3.6 4.4 L12.4 12.4 M12.4 4.4 L3.6 12.4" stroke="#d81414" stroke-width="3.2" fill="none"/></svg>
<div style="left:1px;top:409px;width:265px;height:1px;background:#5b5b5b"></div>
<div style="left:132px;top:410px;width:4px;height:2px;background:#c8c8c8"></div>
<div style="left:139px;top:410px;width:4px;height:2px;background:#c8c8c8"></div>
<div style="left:146px;top:410px;width:4px;height:2px;background:#c8c8c8"></div>
<div style="left:1px;top:416px;width:54px;height:20px;background:#232323"></div>
<div style="left:119px;top:416px;width:93px;height:20px;background:#232323"></div>
<div style="left:1px;top:436px;width:54px;height:1px;background:#5b5b5b"></div>
<div style="left:119px;top:436px;width:147px;height:1px;background:#5b5b5b"></div>
<div style="left:55px;top:413px;width:64px;height:1px;background:#5b5b5b"></div>
<div style="left:55px;top:413px;width:1px;height:24px;background:#5b5b5b"></div>
<div style="left:118px;top:413px;width:1px;height:24px;background:#5b5b5b"></div>
<div style="left:3px;top:418px;width:15px;height:15px;background:radial-gradient(circle at 50% 50%,#000 0,#444 25%,#fff 75%);border:1px solid #000"></div>
<div style="left:58.5px;top:417px;width:15px;height:15px;background:linear-gradient(90deg,#e8a030 0,#f8c050 30%,#f0a838 50%,#f8c050 70%,#e8a030 100%);border:1px solid #000"></div>
<div style="left:120px;top:418px;width:15px;height:15px;background:linear-gradient(90deg,#20303c 0,#e8f0f0 100%);border:1px solid #000"></div>
<div class="t pt" style="left:20px;top:420px;font-size:11px;">Pinsel</div>
<div class="t pt" style="left:75px;top:419px;font-size:11px;">Muster</div>
<div class="t pt" style="left:137px;top:420px;font-size:11px;letter-spacing:.15px">Farbverläufe</div>
<div style="left:5px;top:441px;width:270px;height:17px;background:#212121;border-top:1px solid #2c2c2c"></div>
<div class="t pt it" style="left:7px;top:444px;font-size:11px;color:#6a6a6a">Filter</div>
<div style="left:264px;top:448px;width:2px;height:2px;background:#ddd"></div>
<div class="t pt it" style="left:3px;top:460px;font-size:11px;">Pine (64 × 56)</div>
<div style="left:3px;top:473px;width:262px;height:288px;background:#464646;border-top:1px solid #333"></div>
<div style="left:4px;top:474px;width:238px;height:272px;background:#fff"></div>
<div style="left:4px;top:746px;width:103px;height:15px;background:#fff"></div>
<div style="left:4px;top:644px;width:34px;height:34px;background:#000"></div>
<svg width="32" height="32" viewBox="0 0 32 32" style="left:5px;top:475px;overflow:hidden"><rect x="0" y="0" width="32" height="32" fill="#484848"/><rect x="8" y="8" width="16" height="16" fill="#fff"/></svg>
<svg width="32" height="32" viewBox="0 0 32 32" style="left:39px;top:475px;overflow:hidden"><filter id="n1" x="0" y="0" width="100%" height="100%" color-interpolation-filters="sRGB"><feTurbulence type="fractalNoise" baseFrequency="0.55" numOctaves="2" seed="3"/><feColorMatrix values="0.173 0 0 0 -0.016 0.414 0 0 0 0.279 0.431 0 0 0 0.165 0 0 0 0 1"/></filter><rect x="0" y="0" width="32" height="32" filter="url(#n1)"/><filter id="n2" x="0" y="0" width="100%" height="100%" color-interpolation-filters="sRGB"><feTurbulence type="fractalNoise" baseFrequency="0.9" numOctaves="2" seed="7"/><feColorMatrix values="0 0 0 0 0.498 0 0 0 0 0.816 0 0 0 0 0.722 3 0 0 0 -1.9"/></filter><rect x="0" y="0" width="32" height="32" filter="url(#n2)" opacity="0.5"/></svg>
<svg width="32" height="32" viewBox="0 0 32 32" style="left:73px;top:475px;overflow:hidden"><filter id="n3" x="0" y="0" width="100%" height="100%" color-interpolation-filters="sRGB"><feTurbulence type="fractalNoise" baseFrequency="0.1" numOctaves="3" seed="5"/><feColorMatrix values="0.602 0 0 0 0.091 0.565 0 0 0 0.047 0.546 0 0 0 0.155 0 0 0 0 1"/></filter><rect x="0" y="0" width="32" height="32" filter="url(#n3)"/><filter id="n4" x="0" y="0" width="100%" height="100%" color-interpolation-filters="sRGB"><feTurbulence type="fractalNoise" baseFrequency="0.14 0.1" numOctaves="2" seed="11"/><feColorMatrix values="0 0 0 0 0.706 0 0 0 0 0.643 0 0 0 0 0.737 4 0 0 0 -2.4"/></filter><rect x="0" y="0" width="32" height="32" filter="url(#n4)" opacity="0.6"/></svg>
<svg width="32" height="32" viewBox="0 0 32 32" style="left:107px;top:475px;overflow:hidden"><rect x="0" y="0" width="32" height="32" fill="#000078"/><linearGradient id="g5" x1="0" y1="1" x2="1" y2="0"><stop offset="0" stop-color="#00004c"/><stop offset="0.35" stop-color="#000084"/><stop offset="0.6" stop-color="#0606b4"/><stop offset="0.8" stop-color="#00008c"/><stop offset="1" stop-color="#000060"/></linearGradient><rect x="0" y="0" width="32" height="32" fill="url(#g5)"/><radialGradient id="g6" gradientUnits="userSpaceOnUse" cx="27" cy="9" r="12"><stop offset="0" stop-color="#0a0ad0" stop-opacity="0.7"/><stop offset="1" stop-color="#0000a0" stop-opacity="0"/></radialGradient><rect x="0" y="0" width="32" height="32" fill="url(#g6)"/><linearGradient id="g7" x1="0" y1="0" x2="0.4" y2="0.3"><stop offset="0" stop-color="#000040" stop-opacity="0.8"/><stop offset="1" stop-color="#000040" stop-opacity="0"/></linearGradient><rect x="0" y="0" width="32" height="32" fill="url(#g7)"/></svg>
<svg width="32" height="32" viewBox="0 0 32 32" style="left:141px;top:475px;overflow:hidden"><rect x="0" y="0" width="32" height="32" fill="#484848"/><linearGradient id="g8" x1="0" y1="0" x2="1" y2="1"><stop offset="0" stop-color="#a4a4ec"/><stop offset="0.35" stop-color="#6c6cc8"/><stop offset="0.6" stop-color="#2c2c80"/><stop offset="0.82" stop-color="#06061c"/><stop offset="1" stop-color="#000004"/></linearGradient><rect x="3" y="3" width="26" height="26" fill="url(#g8)"/><filter id="n9" x="0" y="0" width="100%" height="100%" color-interpolation-filters="sRGB"><feTurbulence type="fractalNoise" baseFrequency="0.9" numOctaves="2" seed="4"/><feColorMatrix values="0 0 0 0 0.847 0 0 0 0 0.847 0 0 0 0 1.000 3 0 0 0 -1.7"/></filter><rect x="3" y="3" width="26" height="26" filter="url(#n9)" opacity="0.45"/><filter id="n10" x="0" y="0" width="100%" height="100%" color-interpolation-filters="sRGB"><feTurbulence type="fractalNoise" baseFrequency="0.8" numOctaves="2" seed="9"/><feColorMatrix values="0 0 0 0 0.000 0 0 0 0 0.000 0 0 0 0 0.125 3 0 0 0 -1.6"/></filter><rect x="3" y="3" width="26" height="26" filter="url(#n10)" opacity="0.5"/><linearGradient id="g11" x1="0" y1="0" x2="1" y2="1"><stop offset="0" stop-color="#000008" stop-opacity="0"/><stop offset="0.55" stop-color="#000008" stop-opacity="0"/><stop offset="1" stop-color="#000008" stop-opacity="0.9"/></linearGradient><rect x="3" y="3" width="26" height="26" fill="url(#g11)"/></svg>
<svg width="32" height="32" viewBox="0 0 32 32" style="left:175px;top:475px;overflow:hidden"><rect x="0" y="0" width="32" height="32" fill="#b4dae6"/><rect x="9.5" y="0" width="7" height="5.5" fill="#5c90c4"/><rect x="23.5" y="0" width="7" height="4.5" fill="#1464ec"/><rect x="30.5" y="0" width="1.5" height="4" fill="#60a8f0"/><rect x="17" y="4.5" width="6" height="8.5" fill="#a4a8c4"/><rect x="24" y="5" width="5" height="9.5" fill="#5a7cc4"/><rect x="0" y="11" width="9" height="9" fill="#6a9cc8"/><rect x="24" y="15" width="6.5" height="5" fill="#2c3c94"/><rect x="1" y="21" width="9" height="10.5" fill="#12a2f2"/><rect x="10" y="20.5" width="5.5" height="5" fill="#6c94c4"/><rect x="20" y="20" width="9" height="9" fill="#0c1470"/><rect x="16" y="29.5" width="15" height="2.5" fill="#9494e8"/><rect x="29.5" y="16" width="2.5" height="9" fill="#5474b4"/><rect x="10" y="26" width="6" height="6" fill="#8cc4dc"/><rect x="0" y="0" width="9" height="10" fill="#b8dce4"/><rect x="10" y="6" width="7" height="14" fill="#c0e0e8"/></svg>
<svg width="32" height="32" viewBox="0 0 32 32" style="left:209px;top:475px;overflow:hidden"><filter id="n12" x="0" y="0" width="100%" height="100%" color-interpolation-filters="sRGB"><feTurbulence type="fractalNoise" baseFrequency="0.3" numOctaves="2" seed="2"/><feColorMatrix values="0.376 0 0 0 -0.016 0.565 0 0 0 0.016 0.506 0 0 0 0.663 0 0 0 0 1"/></filter><rect x="0" y="0" width="32" height="32" filter="url(#n12)"/><filter id="n13" x="0" y="0" width="100%" height="100%" color-interpolation-filters="sRGB"><feTurbulence type="fractalNoise" baseFrequency="0.4" numOctaves="1" seed="8"/><feColorMatrix values="0 0 0 0 0.078 0 0 0 0 0.141 0 0 0 0 0.722 4 0 0 0 -2.1"/></filter><rect x="0" y="0" width="32" height="32" filter="url(#n13)" opacity="0.55"/></svg>
<svg width="32" height="32" viewBox="0 0 32 32" style="left:5px;top:509px;overflow:hidden"><filter id="n14" x="0" y="0" width="100%" height="100%" color-interpolation-filters="sRGB"><feTurbulence type="fractalNoise" baseFrequency="0.45" numOctaves="2" seed="3"/><feColorMatrix values="1.186 0 0 0 -0.020 1.186 0 0 0 -0.146 1.142 0 0 0 -0.163 0 0 0 0 1"/></filter><rect x="0" y="0" width="32" height="32" filter="url(#n14)"/><linearGradient id="g15" x1="0" y1="0" x2="1" y2="0.2"><stop offset="0" stop-color="#804030" stop-opacity="0.5"/><stop offset="1" stop-color="#a09088" stop-opacity="0"/></linearGradient><rect x="0" y="0" width="32" height="32" fill="url(#g15)"/><path d="M21.5 6 L24 3.5 L25 8 L25.5 22 L32 22.5 L32 25.5 L25 26.5 L12 27.5 L0 27 L0 24 L10 25.5 L19 24 L21 20 Z" fill="#0c0808"/><path d="M26 24 L28 21 L30 24 Z" fill="#0c0808"/><filter id="n16" x="0" y="0" width="100%" height="100%" color-interpolation-filters="sRGB"><feTurbulence type="fractalNoise" baseFrequency="0.6" numOctaves="2" seed="5"/><feColorMatrix values="0.816 0 0 0 0.251 0.856 0 0 0 0.176 0.856 0 0 0 0.176 0 0 0 0 1"/></filter><rect x="0" y="28.5" width="32" height="3.5" filter="url(#n16)"/><path d="M3 20 L18 6" fill="none" stroke="#c8846c" stroke-width="1.5" opacity="0.5"/></svg>
<svg width="32" height="32" viewBox="0 0 32 32" style="left:39px;top:509px;overflow:hidden"><filter id="n17" x="0" y="0" width="100%" height="100%" color-interpolation-filters="sRGB"><feTurbulence type="fractalNoise" baseFrequency="0.3 0.18" numOctaves="3" seed="4"/><feColorMatrix values="0.734 0 0 0 -0.053 0.469 0 0 0 -0.074 0.224 0 0 0 -0.045 0 0 0 0 1"/></filter><rect x="0" y="0" width="32" height="32" filter="url(#n17)"/><filter id="n18" x="0" y="0" width="100%" height="100%" color-interpolation-filters="sRGB"><feTurbulence type="fractalNoise" baseFrequency="0.5 0.2" numOctaves="2" seed="12"/><feColorMatrix values="0 0 0 0 0.722 0 0 0 0 0.486 0 0 0 0 0.282 4 0 0 0 -2.5"/></filter><rect x="0" y="0" width="32" height="32" filter="url(#n18)" opacity="0.5"/><radialGradient id="g19" gradientUnits="userSpaceOnUse" cx="12" cy="12" r="7"><stop offset="0" stop-color="#0a0404" stop-opacity="0.9"/><stop offset="1" stop-color="#0a0404" stop-opacity="0"/></radialGradient><rect x="0" y="0" width="32" height="32" fill="url(#g19)"/><radialGradient id="g20" gradientUnits="userSpaceOnUse" cx="27" cy="24" r="6"><stop offset="0" stop-color="#10081c" stop-opacity="0.6"/><stop offset="1" stop-color="#10081c" stop-opacity="0"/></radialGradient><rect x="0" y="0" width="32" height="32" fill="url(#g20)"/></svg>
<svg width="32" height="32" viewBox="0 0 32 32" style="left:73px;top:509px;overflow:hidden"><filter id="n21" x="0" y="0" width="100%" height="100%" color-interpolation-filters="sRGB"><feTurbulence type="fractalNoise" baseFrequency="0.14 0.3" numOctaves="3" seed="2"/><feColorMatrix values="0.530 0 0 0 0.480 0.571 0 0 0 0.154 0.408 0 0 0 0.000 0 0 0 0 1"/></filter><rect x="0" y="0" width="32" height="32" filter="url(#n21)"/><filter id="n22" x="0" y="0" width="100%" height="100%" color-interpolation-filters="sRGB"><feTurbulence type="fractalNoise" baseFrequency="0.3" numOctaves="2" seed="9"/><feColorMatrix values="0 0 0 0 0.941 0 0 0 0 0.753 0 0 0 0 0.439 3 0 0 0 -1.8"/></filter><rect x="0" y="18" width="32" height="14" filter="url(#n22)" opacity="0.5"/><linearGradient id="g23" x1="0" y1="0.4" x2="0.3" y2="1"><stop offset="0" stop-color="#d8b060" stop-opacity="0"/><stop offset="1" stop-color="#d8b060" stop-opacity="0.45"/></linearGradient><rect x="0" y="0" width="32" height="32" fill="url(#g23)"/></svg>
<svg width="32" height="32" viewBox="0 0 32 32" style="left:107px;top:509px;overflow:hidden"><rect x="0" y="0" width="32" height="32" fill="#6c2408"/><radialGradient id="g24" gradientUnits="userSpaceOnUse" cx="31" cy="3" r="13"><stop offset="0" stop-color="#e09058" stop-opacity="1"/><stop offset="0.5" stop-color="#c06830" stop-opacity="0.9"/><stop offset="1" stop-color="#6c2408" stop-opacity="0"/></radialGradient><rect x="0" y="0" width="32" height="32" fill="url(#g24)"/><path d="M8 -2 C3 10 6 24 14 34" fill="none" stroke="#a04c1c" stroke-width="4" opacity="0.85"/><path d="M15 -2 C10 12 14 26 24 34" fill="none" stroke="#b05c28" stroke-width="3" opacity="0.7"/><path d="M22 10 C17 16 19 26 30 34" fill="none" stroke="#c87840" stroke-width="3.5" opacity="0.8"/><radialGradient id="g25" gradientUnits="userSpaceOnUse" cx="29" cy="17" r="8" gradientTransform="translate(29 17) scale(1.4 .8) translate(-29 -17)"><stop offset="0" stop-color="#2c0a00" stop-opacity="1"/><stop offset="0.6" stop-color="#3c1000" stop-opacity="0.9"/><stop offset="1" stop-color="#3c1000" stop-opacity="0"/></radialGradient><rect x="0" y="0" width="32" height="32" fill="url(#g25)"/><radialGradient id="g26" gradientUnits="userSpaceOnUse" cx="30" cy="26" r="6"><stop offset="0" stop-color="#d88850" stop-opacity="0.9"/><stop offset="1" stop-color="#d88850" stop-opacity="0"/></radialGradient><rect x="0" y="0" width="32" height="32" fill="url(#g26)"/><linearGradient id="g27" x1="0" y1="0" x2="0.3" y2="0"><stop offset="0" stop-color="#2c0c00" stop-opacity="0.9"/><stop offset="1" stop-color="#2c0c00" stop-opacity="0"/></linearGradient><rect x="0" y="0" width="32" height="32" fill="url(#g27)"/><linearGradient id="g28" x1="0" y1="0.75" x2="0" y2="1"><stop offset="0" stop-color="#2c0c00" stop-opacity="0"/><stop offset="1" stop-color="#2c0c00" stop-opacity="0.8"/></linearGradient><rect x="0" y="0" width="32" height="32" fill="url(#g28)"/></svg>
<svg width="32" height="32" viewBox="0 0 32 32" style="left:141px;top:509px;overflow:hidden"><filter id="n29" x="0" y="0" width="100%" height="100%" color-interpolation-filters="sRGB"><feTurbulence type="fractalNoise" baseFrequency="0.6 0.12" numOctaves="2" seed="3"/><feColorMatrix values="0.198 0 0 0 0.615 0.198 0 0 0 0.552 0.198 0 0 0 0.458 0 0 0 0 1"/></filter><rect x="0" y="0" width="32" height="32" filter="url(#n29)"/><circle cx="14" cy="2.5" r="1.6" fill="#988468" opacity="0.7"/><circle cx="28" cy="27" r="1.5" fill="#b08870" opacity="0.6"/></svg>
<svg width="32" height="32" viewBox="0 0 32 32" style="left:175px;top:509px;overflow:hidden"><filter id="n30" x="0" y="0" width="100%" height="100%" color-interpolation-filters="sRGB"><feTurbulence type="fractalNoise" baseFrequency="0.16" numOctaves="3" seed="6"/><feColorMatrix values="0.612 0 0 0 0.024 0.612 0 0 0 0.024 0.612 0 0 0 0.024 0 0 0 0 1"/></filter><rect x="0" y="0" width="32" height="32" filter="url(#n30)"/><path d="M2 20 L9 15 L14 17 L20 10 L25 3 M12 24 L20 22 L24 16 L31 17 M3 27 L11 29 L16 26 M20 28 L26 27 L31 30" fill="none" stroke="#a8a8a8" stroke-width="1.1" opacity="0.75"/><path d="M3 21.2 L9 16.2 L14 18.2 L20 11.2 L25 4.2 M12 25.2 L20 23.2 L24 17.2 L31 18.2 M20 5 L30 1" fill="none" stroke="#1c1c1c" stroke-width="1.1" opacity="0.7"/></svg>
<svg width="32" height="32" viewBox="0 0 32 32" style="left:209px;top:509px;overflow:hidden"><filter id="n31" x="0" y="0" width="100%" height="100%" color-interpolation-filters="sRGB"><feTurbulence type="fractalNoise" baseFrequency="0.08" numOctaves="2" seed="3"/><feColorMatrix values="0.235 0 0 0 0.380 0.251 0 0 0 0.424 0.251 0 0 0 0.580 0 0 0 0 1"/></filter><rect x="0" y="0" width="32" height="32" filter="url(#n31)"/><linearGradient id="g32" x1="0" y1="1" x2="0" y2="0.6"><stop offset="0" stop-color="#5c6894" stop-opacity="0.5"/><stop offset="1" stop-color="#5c6894" stop-opacity="0"/></linearGradient><rect x="0" y="0" width="32" height="32" fill="url(#g32)"/></svg>
<svg width="32" height="32" viewBox="0 0 32 32" style="left:5px;top:543px;overflow:hidden"><filter id="n33" x="0" y="0" width="100%" height="100%" color-interpolation-filters="sRGB"><feTurbulence type="fractalNoise" baseFrequency="0.07" numOctaves="2" seed="3"/><feColorMatrix values="0.157 0 0 0 0.824 0.220 0 0 0 0.698 0.282 0 0 0 0.573 0 0 0 0 1"/></filter><rect x="0" y="0" width="32" height="32" filter="url(#n33)"/><linearGradient id="g34" x1="0" y1="0" x2="0.5" y2="0.4"><stop offset="0" stop-color="#e0b088" stop-opacity="0.55"/><stop offset="1" stop-color="#e0b088" stop-opacity="0"/></linearGradient><rect x="0" y="0" width="32" height="32" fill="url(#g34)"/></svg>
<svg width="32" height="32" viewBox="0 0 32 32" style="left:39px;top:543px;overflow:hidden"><filter id="n35" x="0" y="0" width="100%" height="100%" color-interpolation-filters="sRGB"><feTurbulence type="fractalNoise" baseFrequency="0.18" numOctaves="3" seed="3"/><feColorMatrix values="0.276 0 0 0 0.709 0.380 0 0 0 0.508 0.414 0 0 0 0.342 0 0 0 0 1"/></filter><rect x="0" y="0" width="32" height="32" filter="url(#n35)"/><path d="M3 0 C9 5 11 9 12.5 13 C14 20 8 26 3 32" fill="none" stroke="#6c4020" stroke-width="1.5" opacity="0.8"/><path d="M12.5 13 C18 10 24 11 32 8 M13 18 C18 20 24 24 32 24 M0 30 C4 28 6 30 8 32" fill="none" stroke="#8c5c34" stroke-width="1.1" opacity="0.7"/><radialGradient id="g36" gradientUnits="userSpaceOnUse" cx="6" cy="18" r="8"><stop offset="0" stop-color="#b88458" stop-opacity="0.5"/><stop offset="1" stop-color="#b88458" stop-opacity="0"/></radialGradient><rect x="0" y="0" width="32" height="32" fill="url(#g36)"/><path d="M14 12 C18 9 24 10 30 7" fill="none" stroke="#f4dcc0" stroke-width="1" opacity="0.6"/></svg>
<svg width="32" height="32" viewBox="0 0 32 32" style="left:73px;top:543px;overflow:hidden"><filter id="n37" x="0" y="0" width="100%" height="100%" color-interpolation-filters="sRGB"><feTurbulence type="fractalNoise" baseFrequency="0.12" numOctaves="2" seed="5"/><feColorMatrix values="0.094 0 0 0 0.008 0.188 0 0 0 0.016 0.314 0 0 0 0.580 0 0 0 0 1"/></filter><rect x="0" y="0" width="32" height="32" filter="url(#n37)"/><filter id="b38" x="-20%" y="-20%" width="140%" height="140%"><feGaussianBlur stdDeviation="0.5"/></filter><g filter="url(#b38)"><path d="M4 2 C6 6 4 10 8 12 C12 14 16 10 20 14 C22 18 20 24 24 28 M20 14 C24 12 28 16 32 15 M0 20 C4 22 6 26 12 24 C16 22 18 26 19 32 M8 12 C6 16 2 14 0 12 M22 2 C24 6 28 4 31 6 M2 28 C4 30 3 31 2 32" fill="none" stroke="#3c9cff" stroke-width="1.6" opacity="0.95"/></g></svg>
<svg width="32" height="32" viewBox="0 0 32 32" style="left:107px;top:543px;overflow:hidden"><filter id="n39" x="0" y="0" width="100%" height="100%" color-interpolation-filters="sRGB"><feTurbulence type="fractalNoise" baseFrequency="0.2" numOctaves="2" seed="3"/><feColorMatrix values="0.251 0 0 0 0.784 0.235 0 0 0 0.804 0.149 0 0 0 0.888 0 0 0 0 1"/></filter><rect x="0" y="0" width="32" height="32" filter="url(#n39)"/><path d="M2 8 C8 4 10 12 16 8 C20 4 24 8 28 4 M6 2 C8 10 14 14 12 22 C10 28 4 26 2 30 M10 10 L22 22 C26 24 28 18 30 22 M14 6 C20 10 24 14 30 12 M18 12 L26 24 M8 26 C14 24 18 30 24 28 M22 30 L25 24 M20 4 L24 12 L30 14 M3 16 L10 18" fill="none" stroke="#3c3c50" stroke-width="0.9" opacity="0.8"/><path d="M12 8 L20 18 M16 14 L24 20 M4 12 L8 20 M26 6 L30 10" fill="none" stroke="#8080a0" stroke-width="0.8" opacity="0.7"/></svg>
<svg width="32" height="32" viewBox="0 0 32 32" style="left:141px;top:543px;overflow:hidden"><filter id="n40" x="0" y="0" width="100%" height="100%" color-interpolation-filters="sRGB"><feTurbulence type="fractalNoise" baseFrequency="0.14" numOctaves="3" seed="4"/><feColorMatrix values="0.693 0 0 0 -0.166 0.693 0 0 0 -0.166 0.693 0 0 0 -0.166 0 0 0 0 1"/></filter><rect x="0" y="0" width="32" height="32" filter="url(#n40)"/><path d="M20 0 C24 6 28 8 32 14 M22 0 C26 5 30 7 32 10" fill="none" stroke="#8c8c8c" stroke-width="1" opacity="0.6"/><circle cx="6" cy="26" r="1" fill="#aaa" opacity="0.7"/><circle cx="9" cy="27" r="0.7" fill="#999" opacity="0.7"/></svg>
<svg width="32" height="32" viewBox="0 0 32 32" style="left:175px;top:543px;overflow:hidden"><filter id="n41" x="0" y="0" width="100%" height="100%" color-interpolation-filters="sRGB"><feTurbulence type="fractalNoise" baseFrequency="0.1" numOctaves="2" seed="3"/><feColorMatrix values="0.141 0 0 0 0.800 0.141 0 0 0 0.808 0.099 0 0 0 0.911 0 0 0 0 1"/></filter><rect x="0" y="0" width="32" height="32" filter="url(#n41)"/><path d="M8 32 L24 2 M14 32 L32 6 M0 24 L14 0 M22 32 L32 18" fill="none" stroke="#f0f2ff" stroke-width="1" opacity="0.7"/></svg>
<svg width="32" height="32" viewBox="0 0 32 32" style="left:209px;top:543px;overflow:hidden"><rect x="0" y="0" width="32" height="32" fill="#28120e"/><ellipse cx="5" cy="4" rx="3.2" ry="2.3" fill="#6c4a3c" transform="rotate(20 5 4)" opacity="0.9"/><ellipse cx="5" cy="4" rx="2.8" ry="0.5" fill="#2c1410" transform="rotate(20 5 4)" opacity="0.8"/><ellipse cx="13" cy="3" rx="3.2" ry="2.3" fill="#6c4a3c" transform="rotate(-30 13 3)" opacity="0.9"/><ellipse cx="13" cy="3" rx="2.8" ry="0.5" fill="#2c1410" transform="rotate(-30 13 3)" opacity="0.8"/><ellipse cx="22" cy="4" rx="3.2" ry="2.3" fill="#6c4a3c" transform="rotate(40 22 4)" opacity="0.9"/><ellipse cx="22" cy="4" rx="2.8" ry="0.5" fill="#2c1410" transform="rotate(40 22 4)" opacity="0.8"/><ellipse cx="29" cy="6" rx="3.2" ry="2.3" fill="#6c4a3c" transform="rotate(-10 29 6)" opacity="0.9"/><ellipse cx="29" cy="6" rx="2.8" ry="0.5" fill="#2c1410" transform="rotate(-10 29 6)" opacity="0.8"/><ellipse cx="8" cy="11" rx="3.2" ry="2.3" fill="#6c4a3c" transform="rotate(-40 8 11)" opacity="0.9"/><ellipse cx="8" cy="11" rx="2.8" ry="0.5" fill="#2c1410" transform="rotate(-40 8 11)" opacity="0.8"/><ellipse cx="17" cy="10" rx="3.2" ry="2.3" fill="#6c4a3c" transform="rotate(10 17 10)" opacity="0.9"/><ellipse cx="17" cy="10" rx="2.8" ry="0.5" fill="#2c1410" transform="rotate(10 17 10)" opacity="0.8"/><ellipse cx="26" cy="13" rx="3.2" ry="2.3" fill="#6c4a3c" transform="rotate(60 26 13)" opacity="0.9"/><ellipse cx="26" cy="13" rx="2.8" ry="0.5" fill="#2c1410" transform="rotate(60 26 13)" opacity="0.8"/><ellipse cx="3" cy="18" rx="3.2" ry="2.3" fill="#6c4a3c" transform="rotate(30 3 18)" opacity="0.9"/><ellipse cx="3" cy="18" rx="2.8" ry="0.5" fill="#2c1410" transform="rotate(30 3 18)" opacity="0.8"/><ellipse cx="12" cy="18" rx="3.2" ry="2.3" fill="#6c4a3c" transform="rotate(-20 12 18)" opacity="0.9"/><ellipse cx="12" cy="18" rx="2.8" ry="0.5" fill="#2c1410" transform="rotate(-20 12 18)" opacity="0.8"/><ellipse cx="21" cy="19" rx="3.2" ry="2.3" fill="#6c4a3c" transform="rotate(30 21 19)" opacity="0.9"/><ellipse cx="21" cy="19" rx="2.8" ry="0.5" fill="#2c1410" transform="rotate(30 21 19)" opacity="0.8"/><ellipse cx="29" cy="21" rx="3.2" ry="2.3" fill="#6c4a3c" transform="rotate(-40 29 21)" opacity="0.9"/><ellipse cx="29" cy="21" rx="2.8" ry="0.5" fill="#2c1410" transform="rotate(-40 29 21)" opacity="0.8"/><ellipse cx="6" cy="26" rx="3.2" ry="2.3" fill="#6c4a3c" transform="rotate(-10 6 26)" opacity="0.9"/><ellipse cx="6" cy="26" rx="2.8" ry="0.5" fill="#2c1410" transform="rotate(-10 6 26)" opacity="0.8"/><ellipse cx="15" cy="26" rx="3.2" ry="2.3" fill="#6c4a3c" transform="rotate(50 15 26)" opacity="0.9"/><ellipse cx="15" cy="26" rx="2.8" ry="0.5" fill="#2c1410" transform="rotate(50 15 26)" opacity="0.8"/><ellipse cx="24" cy="27" rx="3.2" ry="2.3" fill="#6c4a3c" transform="rotate(-20 24 27)" opacity="0.9"/><ellipse cx="24" cy="27" rx="2.8" ry="0.5" fill="#2c1410" transform="rotate(-20 24 27)" opacity="0.8"/><ellipse cx="30" cy="30" rx="3.2" ry="2.3" fill="#6c4a3c" transform="rotate(20 30 30)" opacity="0.9"/><ellipse cx="30" cy="30" rx="2.8" ry="0.5" fill="#2c1410" transform="rotate(20 30 30)" opacity="0.8"/><ellipse cx="10" cy="31" rx="3.2" ry="2.3" fill="#6c4a3c" transform="rotate(0 10 31)" opacity="0.9"/><ellipse cx="10" cy="31" rx="2.8" ry="0.5" fill="#2c1410" transform="rotate(0 10 31)" opacity="0.8"/><filter id="n42" x="0" y="0" width="100%" height="100%" color-interpolation-filters="sRGB"><feTurbulence type="fractalNoise" baseFrequency="0.3" numOctaves="2" seed="5"/><feColorMatrix values="0 0 0 0 0.110 0 0 0 0 0.047 0 0 0 0 0.031 3 0 0 0 -1.3"/></filter><rect x="0" y="0" width="32" height="32" filter="url(#n42)" opacity="0.6"/></svg>
<svg width="32" height="32" viewBox="0 0 32 32" style="left:5px;top:577px;overflow:hidden"><filter id="n43" x="0" y="0" width="100%" height="100%" color-interpolation-filters="sRGB"><feTurbulence type="fractalNoise" baseFrequency="0.2 0.5" numOctaves="2" seed="3"/><feColorMatrix values="0.380 0 0 0 0.179 0.138 0 0 0 -0.006 0.104 0 0 0 -0.013 0 0 0 0 1"/></filter><rect x="0" y="0" width="32" height="32" filter="url(#n43)"/><linearGradient id="g44" x1="0" y1="1" x2="0.3" y2="0.6"><stop offset="0" stop-color="#300404" stop-opacity="0.5"/><stop offset="1" stop-color="#300404" stop-opacity="0"/></linearGradient><rect x="0" y="0" width="32" height="32" fill="url(#g44)"/></svg>
<svg width="32" height="32" viewBox="0 0 32 32" style="left:39px;top:577px;overflow:hidden"><rect x="0" y="0" width="32" height="32" fill="#dcac7c"/><linearGradient id="g45" x1="0" y1="0" x2="1" y2="1"><stop offset="0" stop-color="#e4b488"/><stop offset="1" stop-color="#cc9c6c"/></linearGradient><rect x="0" y="0" width="32" height="32" fill="url(#g45)" opacity="0.7"/><filter id="b46" x="-20%" y="-20%" width="140%" height="140%"><feGaussianBlur stdDeviation="0.35"/></filter><g filter="url(#b46)"><path d="M9 3.5 C3 4 0.5 10 2 16 C4 21 10 22 14 18 C17 15 15 11 12 12 C9 13 9 16 7 15 C5 13 6 9 9 8 C12 7 13 5 9 3.5 ZM18 2 C20 0 28 0 30 2 C31 5 28 7 24 6.5 C20 6 17 5 18 2 Z M21 11 C24 9 30 10 32 12 L32 15 C28 16 22 15 21 11 ZM15 22 C18 19 24 20 26 24 C27 28 26 31 22 31 C20 30 21 27 18 26 C15 25 14 24 15 22 Z M0 27 C2 25 5 26 6 29 C6 31 4 32 0 32 Z M7 29 C8 26 12 26 13 29 C13 31 11 32 8 32 Z M29 20 C31 19 32 20 32 22 L32 24 C30 24 28 22 29 20 Z M0 0 L4 0 C4 2 2 3 0 2 Z" fill="#0a0606"/></g></svg>
<svg width="32" height="32" viewBox="0 0 32 32" style="left:73px;top:577px;overflow:hidden"><linearGradient id="g47" x1="0" y1="0" x2="1" y2="0.15"><stop offset="0" stop-color="#5c3c98"/><stop offset="0.1" stop-color="#3c2078"/><stop offset="0.45" stop-color="#2c1660"/><stop offset="0.75" stop-color="#201048"/><stop offset="1" stop-color="#140830"/></linearGradient><rect x="0" y="0" width="32" height="32" fill="url(#g47)"/><filter id="n48" x="0" y="0" width="100%" height="100%" color-interpolation-filters="sRGB"><feTurbulence type="fractalNoise" baseFrequency="0.6 0.02" numOctaves="2" seed="3"/><feColorMatrix values="0 0 0 0 0.376 0 0 0 0 0.282 0 0 0 0 0.659 3 0 0 0 -1.8"/></filter><rect x="0" y="0" width="32" height="32" filter="url(#n48)" opacity="0.5"/><path d="M15 0 L18 3 L22 8 M21 0 L22 5" fill="none" stroke="#9080c8" stroke-width="0.8" opacity="0.8"/><linearGradient id="g49" x1="0" y1="0.6" x2="0" y2="1"><stop offset="0" stop-color="#0c0420" stop-opacity="0"/><stop offset="1" stop-color="#0c0420" stop-opacity="0.6"/></linearGradient><rect x="0" y="0" width="32" height="32" fill="url(#g49)"/></svg>
<svg width="32" height="32" viewBox="0 0 32 32" style="left:107px;top:577px;overflow:hidden"><rect x="0" y="0" width="32" height="32" fill="#2c6408"/><filter id="b50" x="-20%" y="-20%" width="140%" height="140%"><feGaussianBlur stdDeviation="1.3"/></filter><g filter="url(#b50)"><path d="M-2 30 C6 14 14 8 24 2 L30 4 C22 12 12 20 4 34 Z" fill="#6aa830"/><path d="M6 34 C14 22 24 16 34 10 L34 18 C26 22 20 28 16 34 Z" fill="#5c9c24"/><path d="M2 2 C8 4 12 10 12 16 L6 20 C4 14 0 10 -2 8 Z" fill="#4c8c1c"/><path d="M18 26 L26 20 L24 30 Z" fill="#143404"/><path d="M11 14 L17 12 L13 19 Z" fill="#1c4406"/><path d="M24 0 L32 0 L32 6 Z" fill="#3c7c10"/></g></svg>
<svg width="32" height="32" viewBox="0 0 32 32" style="left:141px;top:577px;overflow:hidden"><filter id="n51" x="0" y="0" width="100%" height="100%" color-interpolation-filters="sRGB"><feTurbulence type="fractalNoise" baseFrequency="0.14" numOctaves="3" seed="3"/><feColorMatrix values="0.226 0 0 0 0.797 0.226 0 0 0 0.797 0.226 0 0 0 0.797 0 0 0 0 1"/></filter><rect x="0" y="0" width="32" height="32" filter="url(#n51)"/></svg>
<svg width="32" height="32" viewBox="0 0 32 32" style="left:175px;top:577px;overflow:hidden"><filter id="n52" x="0" y="0" width="100%" height="100%" color-interpolation-filters="sRGB"><feTurbulence type="fractalNoise" baseFrequency="0.1" numOctaves="3" seed="5"/><feColorMatrix values="0.380 0 0 0 0.665 0.380 0 0 0 0.665 0.380 0 0 0 0.665 0 0 0 0 1"/></filter><rect x="0" y="0" width="32" height="32" filter="url(#n52)"/><filter id="b53" x="-20%" y="-20%" width="140%" height="140%"><feGaussianBlur stdDeviation="1.1"/></filter><g filter="url(#b53)"><path d="M12 6 C14 8 12 12 14 14 M2 18 C8 20 12 18 16 22 M24 18 C28 18 30 16 32 16 M6 2 L10 0" fill="none" stroke="#9c9c9c" stroke-width="1.8" opacity="0.6"/></g></svg>
<svg width="32" height="32" viewBox="0 0 32 32" style="left:209px;top:577px;overflow:hidden"><filter id="n54" x="0" y="0" width="100%" height="100%" color-interpolation-filters="sRGB"><feTurbulence type="fractalNoise" baseFrequency="0.1 0.16" numOctaves="3" seed="2"/><feColorMatrix values="0.243 0 0 0 0.751 0.267 0 0 0 0.718 0.298 0 0 0 0.663 0 0 0 0 1"/></filter><rect x="0" y="0" width="32" height="32" filter="url(#n54)"/><linearGradient id="g55" x1="0" y1="0" x2="0.15" y2="0"><stop offset="0" stop-color="#b0a8a0" stop-opacity="0.5"/><stop offset="1" stop-color="#b0a8a0" stop-opacity="0"/></linearGradient><rect x="0" y="0" width="32" height="32" fill="url(#g55)"/></svg>
<svg width="32" height="32" viewBox="0 0 32 32" style="left:5px;top:611px;overflow:hidden"><rect x="0" y="0" width="32" height="32" fill="#888"/><filter id="b56" x="-20%" y="-20%" width="140%" height="140%"><feGaussianBlur stdDeviation="2.2"/></filter><g filter="url(#b56)"><path d="M-4 -4 H12 V8 L-4 12 Z" fill="#b4b4b4"/><path d="M12 -4 H20 L19 12 L13 10 Z" fill="#202020"/><path d="M20 -4 H27 L26 8 L20 12 Z" fill="#c8c8c8"/><path d="M27 -4 H36 V18 L28 16 L26 8 Z" fill="#080808"/><path d="M-4 12 L12 8 L18 13 L10 22 L2 28 L-4 28 Z" fill="#050505"/><path d="M18 13 L26 10 L36 18 V24 L26 18 Z" fill="#707070"/><ellipse cx="17" cy="27" rx="13" ry="10" fill="#ffffff" transform="rotate(0 17 27)"/><path d="M-4 28 L4 27 L4 36 L-4 36 Z" fill="#d0d0d0"/><path d="M28 24 L36 24 V36 H28 Z" fill="#9c9c9c"/></g></svg>
<svg width="32" height="32" viewBox="0 0 32 32" style="left:39px;top:611px;overflow:hidden"><filter id="n57" x="0" y="0" width="100%" height="100%" color-interpolation-filters="sRGB"><feTurbulence type="fractalNoise" baseFrequency="0.1 0.2" numOctaves="3" seed="4"/><feColorMatrix values="0.816 0 0 0 -0.157 0.816 0 0 0 -0.157 0.816 0 0 0 -0.157 0 0 0 0 1"/></filter><rect x="0" y="0" width="32" height="32" filter="url(#n57)"/><linearGradient id="g58" x1="0" y1="0" x2="0" y2="1"><stop offset="0" stop-color="#080808" stop-opacity="0.75"/><stop offset="0.45" stop-color="#080808" stop-opacity="0"/></linearGradient><rect x="0" y="0" width="32" height="32" fill="url(#g58)"/><linearGradient id="g59" x1="0" y1="0.5" x2="0" y2="1"><stop offset="0" stop-color="#808080" stop-opacity="0"/><stop offset="1" stop-color="#808080" stop-opacity="0.3"/></linearGradient><rect x="0" y="0" width="32" height="32" fill="url(#g59)"/><radialGradient id="g60" gradientUnits="userSpaceOnUse" cx="29" cy="30" r="5"><stop offset="0" stop-color="#08101c" stop-opacity="0.8"/><stop offset="1" stop-color="#08101c" stop-opacity="0"/></radialGradient><rect x="0" y="0" width="32" height="32" fill="url(#g60)"/></svg>
<svg width="32" height="32" viewBox="0 0 32 32" style="left:73px;top:611px;overflow:hidden"><filter id="n61" x="0" y="0" width="100%" height="100%" color-interpolation-filters="sRGB"><feTurbulence type="fractalNoise" baseFrequency="0.5" numOctaves="2" seed="3"/><feColorMatrix values="0.587 0 0 0 0.264 0.587 0 0 0 0.264 0.587 0 0 0 0.264 0 0 0 0 1"/></filter><rect x="0" y="0" width="32" height="32" filter="url(#n61)"/><path d="M-32 32 L0 0 M-28 32 L4 0 M-24 32 L8 0 M-20 32 L12 0 M-16 32 L16 0 M-12 32 L20 0 M-8 32 L24 0 M-4 32 L28 0 M0 32 L32 0 M4 32 L36 0 M8 32 L40 0 M12 32 L44 0 M16 32 L48 0 M20 32 L52 0 M24 32 L56 0 M28 32 L60 0 M32 32 L64 0 " fill="none" stroke="#5c5c5c" stroke-width="0.7" opacity="0.45"/><path d="M-32 0 L0 32 M-28 0 L4 32 M-24 0 L8 32 M-20 0 L12 32 M-16 0 L16 32 M-12 0 L20 32 M-8 0 L24 32 M-4 0 L28 32 M0 0 L32 32 M4 0 L36 32 M8 0 L40 32 M12 0 L44 32 M16 0 L48 32 M20 0 L52 32 M24 0 L56 32 M28 0 L60 32 M32 0 L64 32 " fill="none" stroke="#c8c8c8" stroke-width="0.7" opacity="0.4"/></svg>
<svg width="32" height="32" viewBox="0 0 32 32" style="left:107px;top:611px;overflow:hidden"><filter id="n62" x="0" y="0" width="100%" height="100%" color-interpolation-filters="sRGB"><feTurbulence type="fractalNoise" baseFrequency="0.5 0.07" numOctaves="3" seed="3"/><feColorMatrix values="0.753 0 0 0 0.408 0.894 0 0 0 -0.031 0.565 0 0 0 -0.125 0 0 0 0 1"/></filter><rect x="0" y="0" width="32" height="32" filter="url(#n62)"/><linearGradient id="g63" x1="0.3" y1="0" x2="0.75" y2="0"><stop offset="0" stop-color="#8c2c08" stop-opacity="0"/><stop offset="0.5" stop-color="#8c2c08" stop-opacity="0.6"/><stop offset="1" stop-color="#8c2c08" stop-opacity="0"/></linearGradient><rect x="0" y="0" width="32" height="32" fill="url(#g63)"/><filter id="n64" x="0" y="0" width="100%" height="100%" color-interpolation-filters="sRGB"><feTurbulence type="fractalNoise" baseFrequency="0.6 0.05" numOctaves="2" seed="9"/><feColorMatrix values="0 0 0 0 1.000 0 0 0 0 0.784 0 0 0 0 0.408 4 0 0 0 -2.4"/></filter><rect x="0" y="0" width="32" height="32" filter="url(#n64)" opacity="0.8"/><linearGradient id="g65" x1="0" y1="0" x2="0.25" y2="0"><stop offset="0" stop-color="#e0a050" stop-opacity="0.4"/><stop offset="1" stop-color="#e0a050" stop-opacity="0"/></linearGradient><rect x="0" y="0" width="32" height="32" fill="url(#g65)"/></svg>
<svg width="32" height="32" viewBox="0 0 32 32" style="left:141px;top:611px;overflow:hidden"><filter id="n66" x="0" y="0" width="100%" height="100%" color-interpolation-filters="sRGB"><feTurbulence type="fractalNoise" baseFrequency="0.45 0.08" numOctaves="3" seed="5"/><feColorMatrix values="0.527 0 0 0 0.505 0.489 0 0 0 0.202 0.301 0 0 0 -0.025 0 0 0 0 1"/></filter><rect x="0" y="0" width="32" height="32" filter="url(#n66)"/><rect x="5" y="0" width="4" height="32" fill="#8c4008" opacity="0.45"/><rect x="0" y="23.5" width="32" height="1.2" fill="#7c3808" opacity="0.45"/><linearGradient id="g67" x1="1" y1="0" x2="0.6" y2="0"><stop offset="0" stop-color="#f0a040" stop-opacity="0.35"/><stop offset="1" stop-color="#f0a040" stop-opacity="0"/></linearGradient><rect x="0" y="0" width="32" height="32" fill="url(#g67)"/></svg>
<svg width="32" height="32" viewBox="0 0 32 32" style="left:175px;top:611px;overflow:hidden"><rect x="0" y="0" width="32" height="32" fill="#64200f"/><rect x="1.5" y="0" width="3.5" height="14" fill="#c47850"/><rect x="5.5" y="0" width="2.5" height="14" fill="#d48c64"/><rect x="9.5" y="8" width="3.5" height="14" fill="#b46c44"/><rect x="13.5" y="8" width="2" height="14" fill="#cc8860"/><rect x="17" y="14" width="4" height="16" fill="#c88058"/><rect x="21.5" y="14" width="3.5" height="16" fill="#d89468"/><rect x="27.5" y="22" width="4.5" height="10" fill="#c47c54"/><rect x="0" y="30" width="1.5" height="2" fill="#c88058"/><rect x="9" y="1" width="22" height="2.2" fill="#9c4c30"/><rect x="9" y="4.5" width="22" height="2" fill="#84381e"/><rect x="17" y="8" width="15" height="2.2" fill="#a4543a"/><rect x="17" y="11" width="15" height="2" fill="#7c3018"/><rect x="0" y="15" width="9" height="2.2" fill="#9c4c30"/><rect x="0" y="18.5" width="9" height="2" fill="#a85840"/><rect x="0" y="22.5" width="16.5" height="2.2" fill="#8c4028"/><rect x="0" y="26" width="16.5" height="2" fill="#9c4c30"/><rect x="26" y="14.5" width="6" height="2.2" fill="#9c4c30"/><rect x="26" y="18" width="6" height="2" fill="#84381e"/><rect x="2" y="29.5" width="14" height="2" fill="#7c3018"/><filter id="n68" x="0" y="0" width="100%" height="100%" color-interpolation-filters="sRGB"><feTurbulence type="fractalNoise" baseFrequency="0.5" numOctaves="2" seed="4"/><feColorMatrix values="0 0 0 0 0.235 0 0 0 0 0.063 0 0 0 0 0.031 3 0 0 0 -1.5"/></filter><rect x="0" y="0" width="32" height="32" filter="url(#n68)" opacity="0.45"/></svg>
<svg width="32" height="32" viewBox="0 0 32 32" style="left:209px;top:611px;overflow:hidden"><linearGradient id="g69" x1="0" y1="0" x2="1" y2="1"><stop offset="0" stop-color="#6c3cb4"/><stop offset="0.3" stop-color="#5c5cd0"/><stop offset="0.55" stop-color="#4c84c8"/><stop offset="0.8" stop-color="#58a868"/><stop offset="1" stop-color="#74b450"/></linearGradient><rect x="0" y="0" width="32" height="32" fill="url(#g69)"/><linearGradient id="g70" x1="0.5" y1="0" x2="0.5" y2="0.35"><stop offset="0" stop-color="#b048a8" stop-opacity="0.8"/><stop offset="1" stop-color="#b048a8" stop-opacity="0"/></linearGradient><rect x="0" y="0" width="32" height="32" fill="url(#g70)"/><filter id="b71" x="-20%" y="-20%" width="140%" height="140%"><feGaussianBlur stdDeviation="0.6"/></filter><g filter="url(#b71)"><path d="M15 11 C19 5 29 6 30 13 C29 19 21 16 19 21 C18 26 26 27 31 22" fill="none" stroke="#a89850" stroke-width="2.4" opacity="0.9"/><circle cx="21.5" cy="25" r="3.6" fill="#70cc58"/><circle cx="28" cy="26" r="2.6" fill="#84c850"/><circle cx="3" cy="17" r="4" fill="#4c6cf0"/><path d="M0 25 C6 21 12 25 16 22" fill="none" stroke="#58b070" stroke-width="2.5" opacity="0.9"/><path d="M26 0 C30 4 30 8 32 10" fill="none" stroke="#8c7c9c" stroke-width="2" opacity="0.8"/></g></svg>
<svg width="32" height="32" viewBox="0 0 32 32" style="left:5px;top:645px;overflow:hidden"><rect x="0" y="0" width="32" height="32" fill="#f8b848"/><rect x="3.5" y="0" width="1.5" height="32" fill="#ffcc68" opacity="0.8"/><rect x="5.5" y="0" width="1" height="32" fill="#e49c2c" opacity="0.8"/><rect x="9" y="0" width="1" height="32" fill="#e8a030" opacity="0.9"/><rect x="10.5" y="0" width="2.5" height="32" fill="#ffd074" opacity="0.7"/><rect x="13.5" y="0" width="0.8" height="32" fill="#eca434" opacity="0.8"/><rect x="16" y="0" width="3" height="32" fill="#ffc964" opacity="0.6"/><rect x="20" y="0" width="1" height="32" fill="#e49c2c" opacity="0.9"/><rect x="22" y="0" width="2" height="32" fill="#ffd070" opacity="0.7"/><rect x="24.5" y="0" width="1" height="32" fill="#e8a030" opacity="0.9"/><rect x="27" y="0" width="2.5" height="32" fill="#ffce6c" opacity="0.7"/><rect x="30" y="0" width="1" height="32" fill="#eca838" opacity="0.8"/><linearGradient id="g72" x1="0" y1="0" x2="1" y2="0"><stop offset="0" stop-color="#b06c18" stop-opacity="0.95"/><stop offset="1" stop-color="#f0a838" stop-opacity="0"/></linearGradient><rect x="0" y="0" width="3" height="32" fill="url(#g72)"/><linearGradient id="g73" x1="0" y1="0" x2="0" y2="1"><stop offset="0" stop-color="#d89028" stop-opacity="0"/><stop offset="1" stop-color="#c88020" stop-opacity="0.7"/></linearGradient><rect x="0" y="29" width="32" height="3" fill="url(#g73)"/></svg>
<svg width="32" height="32" viewBox="0 0 32 32" style="left:39px;top:645px;overflow:hidden"><rect x="0" y="0" width="32" height="32" fill="#f6ac40"/><rect x="0" y="0" width="2.5" height="32" fill="#fcbc54" opacity="0.8"/><rect x="2.8" y="0" width="0.8" height="32" fill="#e09428" opacity="0.8"/><rect x="5" y="0" width="3" height="32" fill="#fcc05c" opacity="0.7"/><rect x="8.5" y="0" width="0.8" height="32" fill="#e09428" opacity="0.9"/><rect x="11" y="0" width="3" height="32" fill="#f9b850" opacity="0.7"/><rect x="14.5" y="0" width="1" height="32" fill="#e49a2c" opacity="0.8"/><rect x="17" y="0" width="2" height="32" fill="#fcc05c" opacity="0.6"/><rect x="19.5" y="0" width="0.8" height="32" fill="#e09428" opacity="0.8"/><rect x="22" y="0" width="3.5" height="32" fill="#fcbc58" opacity="0.7"/><rect x="26" y="0" width="1" height="32" fill="#e49a2c" opacity="0.9"/><rect x="28" y="0" width="3" height="32" fill="#fbb84e" opacity="0.7"/></svg>
<svg width="32" height="32" viewBox="0 0 32 32" style="left:73px;top:645px;overflow:hidden"><filter id="n74" x="0" y="0" width="100%" height="100%" color-interpolation-filters="sRGB"><feTurbulence type="fractalNoise" baseFrequency="0.1" numOctaves="2" seed="3"/><feColorMatrix values="0.157 0 0 0 0.839 0.220 0 0 0 0.698 0.220 0 0 0 0.667 0 0 0 0 1"/></filter><rect x="0" y="0" width="32" height="32" filter="url(#n74)"/><filter id="b75" x="-20%" y="-20%" width="140%" height="140%"><feGaussianBlur stdDeviation="0.9"/></filter><g filter="url(#b75)"><path d="M2 4 L14 18 L22 30 M16 2 L30 14 M0 14 L4 20" fill="none" stroke="#d09890" stroke-width="2" opacity="0.75"/></g><linearGradient id="g76" x1="1" y1="0" x2="0.6" y2="0.3"><stop offset="0" stop-color="#f0c8b8" stop-opacity="0.5"/><stop offset="1" stop-color="#f0c8b8" stop-opacity="0"/></linearGradient><rect x="0" y="0" width="32" height="32" fill="url(#g76)"/></svg>
<svg width="32" height="32" viewBox="0 0 32 32" style="left:107px;top:645px;overflow:hidden"><filter id="n77" x="0" y="0" width="100%" height="100%" color-interpolation-filters="sRGB"><feTurbulence type="fractalNoise" baseFrequency="0.16" numOctaves="3" seed="4"/><feColorMatrix values="0.546 0 0 0 0.139 0.527 0 0 0 0.285 0.339 0 0 0 0.670 0 0 0 0 1"/></filter><rect x="0" y="0" width="32" height="32" filter="url(#n77)"/><filter id="n78" x="0" y="0" width="100%" height="100%" color-interpolation-filters="sRGB"><feTurbulence type="fractalNoise" baseFrequency="0.22" numOctaves="2" seed="10"/><feColorMatrix values="0 0 0 0 0.753 0 0 0 0 0.816 0 0 0 0 0.973 4 0 0 0 -2.5"/></filter><rect x="0" y="0" width="32" height="32" filter="url(#n78)" opacity="0.8"/><linearGradient id="g79" x1="1" y1="0.3" x2="0.7" y2="0.3"><stop offset="0" stop-color="#7868c8" stop-opacity="0.4"/><stop offset="1" stop-color="#7868c8" stop-opacity="0"/></linearGradient><rect x="0" y="0" width="32" height="32" fill="url(#g79)"/></svg>
<svg width="32" height="32" viewBox="0 0 32 32" style="left:141px;top:645px;overflow:hidden"><rect x="0" y="0" width="32" height="32" fill="#1a2470"/><path d="M0 0 H32 V3 L16 11.5 L0 4 Z" fill="#46207c"/><path d="M0 4 L15 11.5 L15 27 L0 19.5 Z" fill="#46a89c"/><path d="M16 11.5 L32 3 V22 L16 28 Z" fill="#0e2890"/><path d="M0 20 L15 27.5 L17 32 H0 Z" fill="#3c1c74"/><path d="M16 28 L32 22 V32 H18 Z" fill="#5c2c90"/><path d="M15 27 L16 28 L20 32 H15 Z" fill="#48b0a8"/><path d="M15 11.5 L15 27" fill="none" stroke="#7cd0c8" stroke-width="0.8" opacity="0.8"/><filter id="n80" x="0" y="0" width="100%" height="100%" color-interpolation-filters="sRGB"><feTurbulence type="fractalNoise" baseFrequency="1.1" numOctaves="2" seed="3"/><feColorMatrix values="0 0 0 0 0.627 0 0 0 0 0.910 0 0 0 0 0.847 3 0 0 0 -1.7"/></filter><rect x="0" y="0" width="32" height="32" filter="url(#n80)" opacity="0.4"/><filter id="n81" x="0" y="0" width="100%" height="100%" color-interpolation-filters="sRGB"><feTurbulence type="fractalNoise" baseFrequency="1" numOctaves="2" seed="8"/><feColorMatrix values="0 0 0 0 0.047 0 0 0 0 0.047 0 0 0 0 0.251 3 0 0 0 -1.7"/></filter><rect x="0" y="0" width="32" height="32" filter="url(#n81)" opacity="0.4"/></svg>
<svg width="32" height="32" viewBox="0 0 32 32" style="left:175px;top:645px;overflow:hidden"><rect x="0" y="0" width="32" height="32" fill="#74b0f8"/><filter id="b82" x="-20%" y="-20%" width="140%" height="140%"><feGaussianBlur stdDeviation="1.1"/></filter><g filter="url(#b82)"><path d="M4 -2 L-7 34 M12 -2 L1 34 M20 -2 L9 34 M29 -2 L18 34 M38 -2 L27 34 " fill="none" stroke="#b8dcff" stroke-width="3" opacity="0.8"/><path d="M8 -2 L-3 34 M16.5 -2 L5.5 34 M25 -2 L14 34 M34 -2 L23 34 " fill="none" stroke="#5c9cf0" stroke-width="2.4" opacity="0.8"/></g></svg>
<svg width="32" height="32" viewBox="0 0 32 32" style="left:209px;top:645px;overflow:hidden"><filter id="n83" x="0" y="0" width="100%" height="100%" color-interpolation-filters="sRGB"><feTurbulence type="fractalNoise" baseFrequency="0.5" numOctaves="2" seed="3"/><feColorMatrix values="0.439 0 0 0 0.235 0.439 0 0 0 0.235 0.439 0 0 0 0.235 0 0 0 0 1"/></filter><rect x="0" y="0" width="32" height="32" filter="url(#n83)"/><filter id="b84" x="-20%" y="-20%" width="140%" height="140%"><feGaussianBlur stdDeviation="0.5"/></filter><g filter="url(#b84)"><circle cx="5.5" cy="3.5" r="4.6" fill="#6e6e6e" opacity="0.6"/><path d="M1.0999999999999996 3.5 A4.4 4.4 0 0 1 9.9 3.5" fill="none" stroke="#303030" stroke-width="1.2" opacity="0.7"/><path d="M1.2999999999999998 4.5 A4.4 4.4 0 0 0 9.7 4.5" fill="none" stroke="#c4c4c4" stroke-width="1.1" opacity="0.7"/><circle cx="16.5" cy="3.5" r="4.6" fill="#6e6e6e" opacity="0.6"/><path d="M12.1 3.5 A4.4 4.4 0 0 1 20.9 3.5" fill="none" stroke="#303030" stroke-width="1.2" opacity="0.7"/><path d="M12.3 4.5 A4.4 4.4 0 0 0 20.7 4.5" fill="none" stroke="#c4c4c4" stroke-width="1.1" opacity="0.7"/><circle cx="27.5" cy="3.5" r="4.6" fill="#6e6e6e" opacity="0.6"/><path d="M23.1 3.5 A4.4 4.4 0 0 1 31.9 3.5" fill="none" stroke="#303030" stroke-width="1.2" opacity="0.7"/><path d="M23.3 4.5 A4.4 4.4 0 0 0 31.7 4.5" fill="none" stroke="#c4c4c4" stroke-width="1.1" opacity="0.7"/><circle cx="5.5" cy="15.5" r="4.6" fill="#6e6e6e" opacity="0.6"/><path d="M1.0999999999999996 15.5 A4.4 4.4 0 0 1 9.9 15.5" fill="none" stroke="#303030" stroke-width="1.2" opacity="0.7"/><path d="M1.2999999999999998 16.5 A4.4 4.4 0 0 0 9.7 16.5" fill="none" stroke="#c4c4c4" stroke-width="1.1" opacity="0.7"/><circle cx="16.5" cy="15.5" r="4.6" fill="#6e6e6e" opacity="0.6"/><path d="M12.1 15.5 A4.4 4.4 0 0 1 20.9 15.5" fill="none" stroke="#303030" stroke-width="1.2" opacity="0.7"/><path d="M12.3 16.5 A4.4 4.4 0 0 0 20.7 16.5" fill="none" stroke="#c4c4c4" stroke-width="1.1" opacity="0.7"/><circle cx="27.5" cy="15.5" r="4.6" fill="#6e6e6e" opacity="0.6"/><path d="M23.1 15.5 A4.4 4.4 0 0 1 31.9 15.5" fill="none" stroke="#303030" stroke-width="1.2" opacity="0.7"/><path d="M23.3 16.5 A4.4 4.4 0 0 0 31.7 16.5" fill="none" stroke="#c4c4c4" stroke-width="1.1" opacity="0.7"/><circle cx="5.5" cy="27.5" r="4.6" fill="#6e6e6e" opacity="0.6"/><path d="M1.0999999999999996 27.5 A4.4 4.4 0 0 1 9.9 27.5" fill="none" stroke="#303030" stroke-width="1.2" opacity="0.7"/><path d="M1.2999999999999998 28.5 A4.4 4.4 0 0 0 9.7 28.5" fill="none" stroke="#c4c4c4" stroke-width="1.1" opacity="0.7"/><circle cx="16.5" cy="27.5" r="4.6" fill="#6e6e6e" opacity="0.6"/><path d="M12.1 27.5 A4.4 4.4 0 0 1 20.9 27.5" fill="none" stroke="#303030" stroke-width="1.2" opacity="0.7"/><path d="M12.3 28.5 A4.4 4.4 0 0 0 20.7 28.5" fill="none" stroke="#c4c4c4" stroke-width="1.1" opacity="0.7"/><circle cx="27.5" cy="27.5" r="4.6" fill="#6e6e6e" opacity="0.6"/><path d="M23.1 27.5 A4.4 4.4 0 0 1 31.9 27.5" fill="none" stroke="#303030" stroke-width="1.2" opacity="0.7"/><path d="M23.3 28.5 A4.4 4.4 0 0 0 31.7 28.5" fill="none" stroke="#c4c4c4" stroke-width="1.1" opacity="0.7"/></g></svg>
<svg width="32" height="32" viewBox="0 0 32 32" style="left:5px;top:679px;overflow:hidden"><filter id="n85" x="0" y="0" width="100%" height="100%" color-interpolation-filters="sRGB"><feTurbulence type="fractalNoise" baseFrequency="0.15" numOctaves="2" seed="3"/><feColorMatrix values="0.345 0 0 0 0.573 0.125 0 0 0 0.016 0.125 0 0 0 0.031 0 0 0 0 1"/></filter><rect x="0" y="0" width="32" height="32" filter="url(#n85)"/><path d="M9 8.5 L24 1.5 M6 3 L5 14 L3 24 M1 22 L8 20 M10 10 L22 18 L10 28 M12 16 L10 28 L20 31 M26 2 L31 6" fill="none" stroke="#120304" stroke-width="2.4" stroke-linecap="round" stroke-linejoin="round" opacity="0.95"/></svg>
<svg width="32" height="32" viewBox="0 0 32 32" style="left:39px;top:679px;overflow:hidden"><filter id="n86" x="0" y="0" width="100%" height="100%" color-interpolation-filters="sRGB"><feTurbulence type="fractalNoise" baseFrequency="0.25" numOctaves="3" seed="3"/><feColorMatrix values="0.527 0 0 0 0.176 0.527 0 0 0 0.191 0.527 0 0 0 0.129 0 0 0 0 1"/></filter><rect x="0" y="0" width="32" height="32" filter="url(#n86)"/><rect x="0" y="0" width="32" height="1.5" fill="#a0a494" opacity="0.8"/><path d="M10 1 L32 1.5 L32 4.5 L14 4 Z" fill="#20241c" opacity="0.85"/><path d="M0 5 L13 4.5 L14 11 L11 10.5 L0 9 Z" fill="#f0f0e8" opacity="0.95"/><rect x="0" y="24.5" width="32" height="2.5" fill="#f4f4ec" opacity="0.95"/><filter id="n87" x="0" y="0" width="100%" height="100%" color-interpolation-filters="sRGB"><feTurbulence type="fractalNoise" baseFrequency="0.4" numOctaves="2" seed="6"/><feColorMatrix values="0.439 0 0 0 0.361 0.439 0 0 0 0.376 0.439 0 0 0 0.329 0 0 0 0 1"/></filter><rect x="0" y="27" width="32" height="5" filter="url(#n87)"/></svg>
<svg width="32" height="32" viewBox="0 0 32 32" style="left:73px;top:679px;overflow:hidden"><linearGradient id="g88" x1="0" y1="0" x2="0.3" y2="1"><stop offset="0" stop-color="#a4c0f4"/><stop offset="1" stop-color="#7ca4f0"/></linearGradient><rect x="0" y="0" width="32" height="32" fill="url(#g88)"/><filter id="b89" x="-20%" y="-20%" width="140%" height="140%"><feGaussianBlur stdDeviation="1.6"/></filter><g filter="url(#b89)"><ellipse cx="19" cy="11" rx="6" ry="5" fill="#ffffff" transform="rotate(-20 19 11)" opacity="0.95"/><ellipse cx="13" cy="8" rx="4" ry="3" fill="#f0f4ff" transform="rotate(0 13 8)" opacity="0.8"/><ellipse cx="27" cy="27" rx="6" ry="3" fill="#e4ecff" transform="rotate(0 27 27)" opacity="0.8"/><ellipse cx="3" cy="28" rx="3" ry="5" fill="#c8d8fc" transform="rotate(0 3 28)" opacity="0.7"/><ellipse cx="27" cy="3" rx="4" ry="2.5" fill="#e0e8ff" transform="rotate(0 27 3)" opacity="0.7"/></g><filter id="n90" x="0" y="0" width="100%" height="100%" color-interpolation-filters="sRGB"><feTurbulence type="fractalNoise" baseFrequency="0.2" numOctaves="2" seed="5"/><feColorMatrix values="0 0 0 0 1.000 0 0 0 0 1.000 0 0 0 0 1.000 4 0 0 0 -2.3"/></filter><rect x="0" y="0" width="32" height="32" filter="url(#n90)" opacity="0.5"/></svg>
<svg width="32" height="32" viewBox="0 0 32 32" style="left:107px;top:679px;overflow:hidden"><filter id="n91" x="0" y="0" width="100%" height="100%" color-interpolation-filters="sRGB"><feTurbulence type="fractalNoise" baseFrequency="0.7" numOctaves="2" seed="3"/><feColorMatrix values="0.565 0 0 0 0.008 0.565 0 0 0 0.008 0.565 0 0 0 0.008 0 0 0 0 1"/></filter><rect x="0" y="0" width="32" height="32" filter="url(#n91)"/><linearGradient id="g92" x1="1" y1="0.3" x2="0.6" y2="0.3"><stop offset="0" stop-color="#3c4c54" stop-opacity="0.4"/><stop offset="1" stop-color="#3c4c54" stop-opacity="0"/></linearGradient><rect x="0" y="0" width="32" height="32" fill="url(#g92)"/></svg>
<svg width="32" height="32" viewBox="0 0 32 32" style="left:141px;top:679px;overflow:hidden"><rect x="0" y="0" width="32" height="32" fill="#e0a468"/><rect x="0" y="0" width="7" height="9" fill="#e8a838"/><rect x="7" y="0" width="6" height="6" fill="#f0b070"/><rect x="13" y="0" width="4" height="7" fill="#e8b8a0"/><rect x="17" y="0" width="9" height="7" fill="#84e4e0"/><rect x="26" y="0" width="3" height="8" fill="#c8c8a0"/><rect x="29" y="0" width="3" height="9" fill="#6c5c7c"/><rect x="0" y="9" width="8" height="7" fill="#f0c070"/><rect x="8" y="6" width="7" height="10" fill="#f4a468"/><rect x="15" y="8" width="5" height="9" fill="#f0c8a0"/><rect x="20" y="8" width="2" height="4" fill="#201c1c"/><rect x="22" y="9" width="9" height="10" fill="#c43c38"/><rect x="0" y="16" width="4" height="8" fill="#d8c8a8"/><rect x="4" y="16" width="10" height="10" fill="#a4d8a4"/><rect x="14" y="17" width="6" height="10" fill="#e8d0a8"/><rect x="20" y="19" width="11" height="9" fill="#b84440"/><rect x="0" y="24" width="6" height="6" fill="#50504c"/><rect x="6" y="26" width="8" height="6" fill="#c8d0b8"/><rect x="14" y="27" width="8" height="5" fill="#9c8c7c"/><rect x="22" y="28" width="10" height="4" fill="#985048"/><rect x="31" y="9" width="1" height="19" fill="#e0b090"/><filter id="n93" x="0" y="0" width="100%" height="100%" color-interpolation-filters="sRGB"><feTurbulence type="fractalNoise" baseFrequency="0.5" numOctaves="2" seed="4"/><feColorMatrix values="0 0 0 0 1.000 0 0 0 0 1.000 0 0 0 0 1.000 3 0 0 0 -1.6"/></filter><rect x="0" y="0" width="32" height="32" filter="url(#n93)" opacity="0.2"/></svg>
<svg width="32" height="32" viewBox="0 0 32 32" style="left:175px;top:679px;overflow:hidden"><rect x="0" y="0" width="32" height="32" fill="#02020c"/><radialGradient id="g94" gradientUnits="userSpaceOnUse" cx="8" cy="3" r="19"><stop offset="0" stop-color="#1414b4" stop-opacity="1"/><stop offset="0.5" stop-color="#0c0c70" stop-opacity="0.8"/><stop offset="1" stop-color="#02020c" stop-opacity="0"/></radialGradient><rect x="0" y="0" width="32" height="32" fill="url(#g94)"/><linearGradient id="g95" x1="0" y1="0.4" x2="0" y2="1"><stop offset="0" stop-color="#02020c" stop-opacity="0"/><stop offset="1" stop-color="#02020c" stop-opacity="0.9"/></linearGradient><rect x="0" y="0" width="32" height="32" fill="url(#g95)"/><circle cx="15.5" cy="26" r="0.9" fill="#8c8c9c" opacity="0.8"/><circle cx="12" cy="26" r="0.5" fill="#606070" opacity="0.7"/></svg>
<svg width="32" height="32" viewBox="0 0 32 32" style="left:209px;top:679px;overflow:hidden"><filter id="n96" x="0" y="0" width="100%" height="100%" color-interpolation-filters="sRGB"><feTurbulence type="fractalNoise" baseFrequency="0.3" numOctaves="2" seed="3"/><feColorMatrix values="0.408 0 0 0 0.243 0.408 0 0 0 0.306 0.345 0 0 0 0.525 0 0 0 0 1"/></filter><rect x="0" y="0" width="32" height="32" filter="url(#n96)"/><path d="M0 0 L21 0 L24 9 L6 15 L0 12 Z" fill="#5c6c9c" opacity="0.6"/><path d="M0 16 L14 16 L18 25 L4 32 L0 32 Z" fill="#8c9ccc" opacity="0.6"/><path d="M22 24 L32 20 L32 32 L16 32 Z" fill="#a4b4dc" opacity="0.6"/><path d="M6 0 L14 5 M20 0 L24 9 L32 6 M24 9 L15 15 L0 23 M15 15 L19 20 L32 15 M19 20 L12 31 M19 24 L27 31 L32 29" fill="none" stroke="#141824" stroke-width="1.5" opacity="0.9"/></svg>
<svg width="32" height="32" viewBox="0 0 32 32" style="left:5px;top:713px;overflow:hidden"><rect x="0" y="0" width="32" height="32" fill="#060606"/><rect x="0" y="1" width="32" height="2" fill="#5e5e5e"/><rect x="0" y="5" width="32" height="2" fill="#5e5e5e"/><rect x="0" y="9" width="32" height="2" fill="#5e5e5e"/><rect x="0" y="13" width="32" height="2" fill="#5e5e5e"/><rect x="0" y="17" width="32" height="2" fill="#5e5e5e"/><rect x="0" y="21" width="32" height="2" fill="#5e5e5e"/><rect x="0" y="25" width="32" height="2" fill="#5e5e5e"/><rect x="0" y="29" width="32" height="2" fill="#5e5e5e"/></svg>
<svg width="32" height="32" viewBox="0 0 32 32" style="left:39px;top:713px;overflow:hidden"><rect x="0" y="0" width="32" height="32" fill="#0a0a0a"/><rect x="0" y="1" width="32" height="1" fill="#444"/><rect x="0" y="3" width="32" height="1" fill="#444"/><rect x="0" y="5" width="32" height="1" fill="#444"/><rect x="0" y="7" width="32" height="1" fill="#444"/><rect x="0" y="9" width="32" height="1" fill="#444"/><rect x="0" y="11" width="32" height="1" fill="#444"/><rect x="0" y="13" width="32" height="1" fill="#444"/><rect x="0" y="15" width="32" height="1" fill="#444"/><rect x="0" y="17" width="32" height="1" fill="#444"/><rect x="0" y="19" width="32" height="1" fill="#444"/><rect x="0" y="21" width="32" height="1" fill="#444"/><rect x="0" y="23" width="32" height="1" fill="#444"/><rect x="0" y="25" width="32" height="1" fill="#444"/><rect x="0" y="27" width="32" height="1" fill="#444"/><rect x="0" y="29" width="32" height="1" fill="#444"/><rect x="0" y="31" width="32" height="1" fill="#444"/></svg>
<svg width="32" height="32" viewBox="0 0 32 32" style="left:73px;top:713px;overflow:hidden"><filter id="n97" x="0" y="0" width="100%" height="100%" color-interpolation-filters="sRGB"><feTurbulence type="fractalNoise" baseFrequency="0.1 0.16" numOctaves="2" seed="3"/><feColorMatrix values="0.251 0 0 0 0.737 0.314 0 0 0 0.314 0.282 0 0 0 0.024 0 0 0 0 1"/></filter><rect x="0" y="0" width="32" height="32" filter="url(#n97)"/><path d="M0 12 C6 14 14 22 19 32" fill="none" stroke="#3c1406" stroke-width="1.4" opacity="0.95"/><path d="M0 13.5 C6 15.5 13 23 17.5 32" fill="none" stroke="#f0a050" stroke-width="1" opacity="0.5"/></svg>
<svg width="32" height="32" viewBox="0 0 32 32" style="left:107px;top:713px;overflow:hidden"><filter id="n98" x="0" y="0" width="100%" height="100%" color-interpolation-filters="sRGB"><feTurbulence type="fractalNoise" baseFrequency="0.9 0.25" numOctaves="2" seed="3"/><feColorMatrix values="2.108 0 0 0 -0.474 2.309 0 0 0 -0.668 2.259 0 0 0 -0.698 0 0 0 0 1"/></filter><rect x="0" y="0" width="32" height="32" filter="url(#n98)"/><rect x="9.5" y="0" width="3.5" height="32" fill="#2c1408" opacity="0.85"/><rect x="21.5" y="0" width="4.5" height="32" fill="#34200c" opacity="0.8"/><rect x="0" y="0" width="3" height="32" fill="#4c2c1c" opacity="0.5"/><linearGradient id="g99" x1="0" y1="0" x2="1" y2="0"><stop offset="0" stop-color="#6c4830" stop-opacity="0.35"/><stop offset="1" stop-color="#6c4830" stop-opacity="0.35"/></linearGradient><rect x="0" y="0" width="32" height="32" fill="url(#g99)"/></svg>
<svg width="32" height="32" viewBox="0 0 32 32" style="left:141px;top:713px;overflow:hidden"><filter id="n100" x="0" y="0" width="100%" height="100%" color-interpolation-filters="sRGB"><feTurbulence type="fractalNoise" baseFrequency="0.3 0.1" numOctaves="3" seed="3"/><feColorMatrix values="0.449 0 0 0 0.301 0.380 0 0 0 0.085 0.242 0 0 0 0.013 0 0 0 0 1"/></filter><rect x="0" y="0" width="32" height="32" filter="url(#n100)"/><radialGradient id="g101" gradientUnits="userSpaceOnUse" cx="7" cy="3" r="6"><stop offset="0" stop-color="#3c1408" stop-opacity="0.8"/><stop offset="1" stop-color="#3c1408" stop-opacity="0"/></radialGradient><rect x="0" y="0" width="32" height="32" fill="url(#g101)"/><linearGradient id="g102" x1="1" y1="0" x2="0.6" y2="0"><stop offset="0" stop-color="#b4683c" stop-opacity="0.4"/><stop offset="1" stop-color="#b4683c" stop-opacity="0"/></linearGradient><rect x="0" y="0" width="32" height="32" fill="url(#g102)"/></svg>
<svg width="32" height="32" viewBox="0 0 32 32" style="left:175px;top:713px;overflow:hidden"><rect x="0" y="0" width="32" height="32" fill="#484848"/><rect x="6" y="6" width="20" height="20" fill="#000"/><path d="M13 6 L26 6 L26 6.5 L6.5 26 L6 26 L6 13 Z" fill="#fff000"/><path d="M26 17.5 L26 26 L17.5 26 Z" fill="#fff000"/></svg>
<svg width="32" height="32" viewBox="0 0 32 32" style="left:209px;top:713px;overflow:hidden"><filter id="n103" x="0" y="0" width="100%" height="100%" color-interpolation-filters="sRGB"><feTurbulence type="fractalNoise" baseFrequency="0.08 0.5" numOctaves="2" seed="3"/><feColorMatrix values="0.345 0 0 0 0.612 0.345 0 0 0 0.502 0.345 0 0 0 0.329 0 0 0 0 1"/></filter><rect x="0" y="0" width="32" height="32" filter="url(#n103)"/></svg>
<svg width="32" height="14" viewBox="0 0 32 14" style="left:5px;top:747px;overflow:hidden"><filter id="n104" x="0" y="0" width="100%" height="100%" color-interpolation-filters="sRGB"><feTurbulence type="fractalNoise" baseFrequency="0.05 0.35" numOctaves="2" seed="3"/><feColorMatrix values="0.518 0 0 0 0.471 0.500 0 0 0 0.177 0.345 0 0 0 0.016 0 0 0 0 1"/></filter><rect x="0" y="0" width="32" height="32" filter="url(#n104)"/></svg>
<svg width="32" height="14" viewBox="0 0 32 14" style="left:39px;top:747px;overflow:hidden"><filter id="n105" x="0" y="0" width="100%" height="100%" color-interpolation-filters="sRGB"><feTurbulence type="fractalNoise" baseFrequency="0.05 0.35" numOctaves="2" seed="4"/><feColorMatrix values="0.518 0 0 0 0.282 0.345 0 0 0 0.078 0.138 0 0 0 0.009 0 0 0 0 1"/></filter><rect x="0" y="0" width="32" height="32" filter="url(#n105)"/></svg>
<svg width="32" height="14" viewBox="0 0 32 14" style="left:73px;top:747px;overflow:hidden"><filter id="n106" x="0" y="0" width="100%" height="100%" color-interpolation-filters="sRGB"><feTurbulence type="fractalNoise" baseFrequency="0.05 0.35" numOctaves="2" seed="5"/><feColorMatrix values="0.483 0 0 0 0.574 0.483 0 0 0 0.355 0.414 0 0 0 0.013 0 0 0 0 1"/></filter><rect x="0" y="0" width="32" height="32" filter="url(#n106)"/></svg>
<div style="left:5px;top:760px;width:270px;height:20px;background:#1f1f1f;border-top:1px solid #2c2c2c"></div>
<div class="t pt" style="left:8px;top:766px;font-size:11px;">Wood,</div>
<div style="left:264px;top:768px;width:2px;height:2px;background:#ddd"></div>
<svg width="16" height="16" viewBox="0 0 16 16" style="left:30px;top:786px"><rect x="4.5" y="5" width="8.5" height="8.5" fill="#3a70c8" stroke="#78a4e8" stroke-width="1"/><rect x="1.5" y="1.5" width="6.5" height="6.5" fill="#a8c4f0" stroke="#78a4e8" stroke-width="1"/></svg>
<svg width="16" height="16" viewBox="0 0 16 16" style="left:99px;top:786px"><path d="M3.5 3.5 L12.5 12.5 M12.5 3.5 L3.5 12.5" stroke="#a05050" stroke-width="3" stroke-dasharray="1 1" fill="none"/></svg>
<svg width="16" height="16" viewBox="0 0 16 16" style="left:168px;top:786px"><path d="M12.4 9 A4.6 4.6 0 1 1 8.6 3.6" stroke="#70c010" stroke-width="2.2" fill="none"/><path d="M8 0.6 L13 4 L8 7.4 Z" fill="#70c010"/></svg>
<svg width="16" height="16" viewBox="0 0 16 16" style="left:237px;top:786px"><path d="M4 1.5 H12 V8 H4 Z" fill="#f4f4f4"/><path d="M1.5 6 H6 L7.5 7.5 H14.5 V14.5 H1.5 Z" fill="#4a88d8"/><path d="M1.5 9 H14.5 V14.5 H1.5 Z" fill="#6aa4ec"/></svg>
<div style="left:0px;top:807px;width:266px;height:1px;background:#5b5b5b"></div>
<div style="left:0px;top:808px;width:266px;height:26px;background:#454545"></div>
</div>
</div>
</body>
</html>
